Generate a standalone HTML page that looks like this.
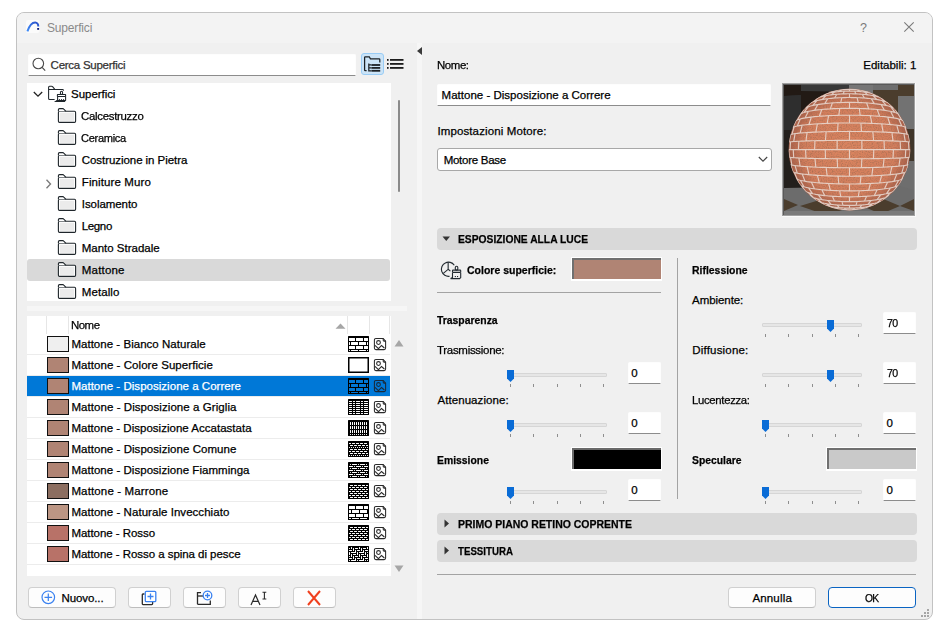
<!DOCTYPE html>
<html><head><meta charset="utf-8"><style>
html,body{margin:0;padding:0;width:950px;height:639px;overflow:hidden;background:#fff;}
body{position:relative;font-family:"Liberation Sans",sans-serif;}
.a{position:absolute;box-sizing:border-box;}
.t{position:absolute;white-space:nowrap;font-family:"Liberation Sans",sans-serif;-webkit-text-stroke:0.25px currentColor;}
svg{position:absolute;overflow:visible;}
.sep{position:absolute;height:1px;background:#ececec;}
.sw{position:absolute;box-sizing:border-box;width:22px;height:16px;border:1.5px solid #111;}
.btn{position:absolute;box-sizing:border-box;background:#fdfdfd;border:1px solid #d0d0d0;border-bottom-color:#bdbdbd;border-radius:4px;}
.inp{position:absolute;box-sizing:border-box;background:#fff;border:1px solid #fdfdfd;border-bottom:1px solid #8c8c8c;border-radius:2px 2px 0 0;}
.trk{position:absolute;box-sizing:border-box;height:4px;background:#e6e6e6;border:1px solid #d6d6d6;border-radius:1px;}
.hdr{position:absolute;box-sizing:border-box;background:#d9d9d9;border-radius:4px;}
</style></head><body>
<!-- dialog frame -->
<div class="a" style="left:16px;top:12px;width:917px;height:608px;border:1px solid #c2c2c2;border-radius:8px;background:#f0f0f0;"></div>
<div class="a" style="left:17px;top:13px;width:915px;height:30px;background:#f3f3f3;border-radius:7px 7px 0 0;"></div>
<!-- title icon -->
<svg style="left:24px;top:18px" width="18" height="18" viewBox="0 0 18 18"><rect x="2" y="2" width="13.5" height="13" rx="2" fill="#fbfbfb"/><defs><linearGradient id="tg" x1="0" y1="1" x2="1" y2="0"><stop offset="0" stop-color="#3f8df8"/><stop offset="1" stop-color="#2a4fc8"/></linearGradient></defs><path d="M3.4 13.4 C5 8.5 7.8 4.4 11.2 4.4 C13 4.4 14.3 6.3 14.3 8.4" fill="none" stroke="url(#tg)" stroke-width="2"/><rect x="13.2" y="10" width="1.9" height="1.8" fill="#0b1a7a"/></svg>
<!-- ? and X -->
<div class="t" style="left:860px;top:19.5px;font-size:12.5px;line-height:16px;color:#7a7a7a;-webkit-text-stroke:0;">?</div>
<svg style="left:904px;top:22px" width="10" height="10" viewBox="0 0 10 10"><path d="M0.3 0.3 L9.7 9.7 M9.7 0.3 L0.3 9.7" stroke="#7a7a7a" stroke-width="1.1"/></svg>

<!-- vertical splitter -->
<div class="a" style="left:417px;top:43px;width:5px;height:576px;background:#f6f6f6;"></div>
<svg style="left:417px;top:47px" width="5" height="8" viewBox="0 0 5 8"><path d="M5 0 L0 4 L5 8 Z" fill="#3a3a3a"/></svg>

<!-- search box -->
<div class="inp" style="left:28px;top:54px;width:328px;height:22px;"></div>
<svg style="left:31px;top:57px" width="16" height="16" viewBox="0 0 16 16"><circle cx="7.3" cy="6.5" r="5.3" fill="none" stroke="#4a4a4a" stroke-width="1.1"/><path d="M11.1 10.4 L14.2 13.6" stroke="#4a4a4a" stroke-width="1.2"/></svg>
<!-- toggle tree view button -->
<div class="a" style="left:361px;top:53px;width:23px;height:22px;background:#cce4f7;border:1px solid #99ccf5;border-radius:3px;"></div>
<svg style="left:364px;top:56px" width="17" height="17" viewBox="0 0 17 17"><path d="M2.6 14.6 H1.3 Q0.6 14.6 0.6 13.9 V1.5 Q0.6 0.8 1.3 0.8 H5.3 L6.4 2.9 H15.1 Q15.8 2.9 15.8 3.6 V6.6" fill="none" stroke="#1c2125" stroke-width="1.25"/><path d="M4.8 7.6 V15.4 M4.8 8.9 H7 M4.8 11.9 H7 M4.8 14.8 H7" fill="none" stroke="#1c2125" stroke-width="1.2"/><rect x="7.3" y="8.1" width="8.9" height="1.8" fill="#1c2125"/><rect x="7.3" y="11" width="8.9" height="1.8" fill="#1c2125"/><rect x="7.3" y="13.9" width="8.9" height="1.8" fill="#1c2125"/></svg>
<svg style="left:387px;top:58px" width="17" height="12" viewBox="0 0 17 12"><rect x="0" y="1" width="1.6" height="1.8" fill="#1c1c1c"/><rect x="3" y="1" width="13.5" height="1.8" fill="#1c1c1c"/><rect x="0" y="5" width="1.6" height="1.8" fill="#1c1c1c"/><rect x="3" y="5" width="13.5" height="1.8" fill="#1c1c1c"/><rect x="0" y="9" width="1.6" height="1.8" fill="#1c1c1c"/><rect x="3" y="9" width="13.5" height="1.8" fill="#1c1c1c"/></svg>

<!-- tree -->
<div class="a" style="left:27px;top:83px;width:364px;height:218px;background:#fff;"></div>
<div class="a" style="left:27px;top:259px;width:363px;height:22px;background:#d9d9d9;border-radius:3px;"></div>
<div class="a" style="left:398px;top:100px;width:2px;height:92px;background:#8a8a8a;border-radius:1px;"></div>
<svg style="left:33.4px;top:91.3px" width="10" height="7" viewBox="0 0 10 7"><path d="M0.8 1 L5 5.2 L9.2 1" fill="none" stroke="#222" stroke-width="1.3"/></svg>
<svg style="left:45px;top:178.8px" width="7" height="10" viewBox="0 0 7 10"><path d="M1.5 0.8 L5.5 5 L1.5 9.2" fill="none" stroke="#7a7a7a" stroke-width="1.35"/></svg>
<!-- superfici icon -->
<svg style="left:44px;top:84px" width="26" height="20" viewBox="0 0 26 20"><g fill="none" stroke="#1f262b" stroke-width="1.05"><path d="M10.6 15.4 H5.6 Q4.6 15.4 4.6 14.4 V3.3 Q4.6 2.3 5.6 2.3 H7.6 Q8.3 2.3 8.8 2.9 L10.8 5.4"/><path d="M4.6 5.5 H18.6 Q19.4 5.5 19.4 6.3 V6.8"/><rect x="16.4" y="7.3" width="2.2" height="3.1" rx="1.1"/><rect x="13.4" y="10.4" width="8.2" height="2.1" rx="0.3"/><path d="M13.6 12.5 V16.3 L11.8 17.4 H20.4 L21.6 16.3 V12.5"/></g><g fill="#1f262b"><circle cx="15.4" cy="15.6" r="0.6"/><circle cx="17.5" cy="15.6" r="0.6"/><circle cx="19.6" cy="15.6" r="0.6"/><path d="M11.3 17.2 L13.6 16 H21.6 L20.6 17.8 H11.3 Z"/></g></svg>
<svg style="left:54px;top:104px" width="26" height="22" viewBox="0 0 26 22"><rect x="4.4" y="7.3" width="17.2" height="11.1" rx="1.1" fill="#fff" stroke="#1f262b" stroke-width="1.1"/><rect x="5.9" y="8.8" width="14.2" height="8.1" fill="#ebebeb"/><path d="M4.4 7.3 V5.7 Q4.4 4.6 5.5 4.6 H8.9 Q9.4 4.6 9.8 5.1 L11.9 7.3" fill="#fff" stroke="#1f262b" stroke-width="1.1"/></svg>
<svg style="left:54px;top:126px" width="26" height="22" viewBox="0 0 26 22"><rect x="4.4" y="7.3" width="17.2" height="11.1" rx="1.1" fill="#fff" stroke="#1f262b" stroke-width="1.1"/><rect x="5.9" y="8.8" width="14.2" height="8.1" fill="#ebebeb"/><path d="M4.4 7.3 V5.7 Q4.4 4.6 5.5 4.6 H8.9 Q9.4 4.6 9.8 5.1 L11.9 7.3" fill="#fff" stroke="#1f262b" stroke-width="1.1"/></svg>
<svg style="left:54px;top:148px" width="26" height="22" viewBox="0 0 26 22"><rect x="4.4" y="7.3" width="17.2" height="11.1" rx="1.1" fill="#fff" stroke="#1f262b" stroke-width="1.1"/><rect x="5.9" y="8.8" width="14.2" height="8.1" fill="#ebebeb"/><path d="M4.4 7.3 V5.7 Q4.4 4.6 5.5 4.6 H8.9 Q9.4 4.6 9.8 5.1 L11.9 7.3" fill="#fff" stroke="#1f262b" stroke-width="1.1"/></svg>
<svg style="left:54px;top:170px" width="26" height="22" viewBox="0 0 26 22"><rect x="4.4" y="7.3" width="17.2" height="11.1" rx="1.1" fill="#fff" stroke="#1f262b" stroke-width="1.1"/><rect x="5.9" y="8.8" width="14.2" height="8.1" fill="#ebebeb"/><path d="M4.4 7.3 V5.7 Q4.4 4.6 5.5 4.6 H8.9 Q9.4 4.6 9.8 5.1 L11.9 7.3" fill="#fff" stroke="#1f262b" stroke-width="1.1"/></svg>
<svg style="left:54px;top:192px" width="26" height="22" viewBox="0 0 26 22"><rect x="4.4" y="7.3" width="17.2" height="11.1" rx="1.1" fill="#fff" stroke="#1f262b" stroke-width="1.1"/><rect x="5.9" y="8.8" width="14.2" height="8.1" fill="#ebebeb"/><path d="M4.4 7.3 V5.7 Q4.4 4.6 5.5 4.6 H8.9 Q9.4 4.6 9.8 5.1 L11.9 7.3" fill="#fff" stroke="#1f262b" stroke-width="1.1"/></svg>
<svg style="left:54px;top:214px" width="26" height="22" viewBox="0 0 26 22"><rect x="4.4" y="7.3" width="17.2" height="11.1" rx="1.1" fill="#fff" stroke="#1f262b" stroke-width="1.1"/><rect x="5.9" y="8.8" width="14.2" height="8.1" fill="#ebebeb"/><path d="M4.4 7.3 V5.7 Q4.4 4.6 5.5 4.6 H8.9 Q9.4 4.6 9.8 5.1 L11.9 7.3" fill="#fff" stroke="#1f262b" stroke-width="1.1"/></svg>
<svg style="left:54px;top:236px" width="26" height="22" viewBox="0 0 26 22"><rect x="4.4" y="7.3" width="17.2" height="11.1" rx="1.1" fill="#fff" stroke="#1f262b" stroke-width="1.1"/><rect x="5.9" y="8.8" width="14.2" height="8.1" fill="#ebebeb"/><path d="M4.4 7.3 V5.7 Q4.4 4.6 5.5 4.6 H8.9 Q9.4 4.6 9.8 5.1 L11.9 7.3" fill="#fff" stroke="#1f262b" stroke-width="1.1"/></svg>
<svg style="left:54px;top:258px" width="26" height="22" viewBox="0 0 26 22"><rect x="4.4" y="7.3" width="17.2" height="11.1" rx="1.1" fill="#fff" stroke="#1f262b" stroke-width="1.1"/><rect x="5.9" y="8.8" width="14.2" height="8.1" fill="#ebebeb"/><path d="M4.4 7.3 V5.7 Q4.4 4.6 5.5 4.6 H8.9 Q9.4 4.6 9.8 5.1 L11.9 7.3" fill="#fff" stroke="#1f262b" stroke-width="1.1"/></svg>
<svg style="left:54px;top:280px" width="26" height="22" viewBox="0 0 26 22"><rect x="4.4" y="7.3" width="17.2" height="11.1" rx="1.1" fill="#fff" stroke="#1f262b" stroke-width="1.1"/><rect x="5.9" y="8.8" width="14.2" height="8.1" fill="#ebebeb"/><path d="M4.4 7.3 V5.7 Q4.4 4.6 5.5 4.6 H8.9 Q9.4 4.6 9.8 5.1 L11.9 7.3" fill="#fff" stroke="#1f262b" stroke-width="1.1"/></svg>

<!-- horizontal splitter -->
<div class="a" style="left:27px;top:306px;width:380px;height:5px;background:#f6f6f6;"></div>

<!-- list -->
<div class="a" style="left:27px;top:316px;width:364px;height:260px;background:#fff;"></div>
<div class="a" style="left:46px;top:316px;width:1px;height:18px;background:#e6e6e6;"></div>
<div class="a" style="left:68px;top:316px;width:1px;height:18px;background:#e6e6e6;"></div>
<div class="a" style="left:347px;top:316px;width:1px;height:18px;background:#e6e6e6;"></div>
<div class="a" style="left:369px;top:316px;width:1px;height:18px;background:#e6e6e6;"></div>
<div class="a" style="left:389px;top:316px;width:1px;height:18px;background:#e6e6e6;"></div>
<svg style="left:335px;top:323px" width="11" height="6" viewBox="0 0 11 6"><path d="M0.5 5.8 L5.5 0.5 L10.5 5.8 Z" fill="#a6a6a6"/></svg>
<div class="sep" style="left:27px;top:354px;width:363px;"></div>
<div class="sw" style="left:47px;top:336px;background:#efefef;"></div>
<svg style="left:348px;top:336px" width="21" height="16" viewBox="0 0 21 16"><rect x="0" y="0" width="21" height="16" rx="0.5" fill="#000"/><rect x="1" y="2" width="6" height="3" rx="0.3" fill="#fff"/><rect x="8" y="2" width="7" height="3" rx="0.3" fill="#fff"/><rect x="16" y="2" width="4" height="3" rx="0.3" fill="#fff"/><rect x="1" y="6" width="1" height="3" rx="0.3" fill="#fff"/><rect x="3" y="6" width="7" height="3" rx="0.3" fill="#fff"/><rect x="11" y="6" width="7" height="3" rx="0.3" fill="#fff"/><rect x="19" y="6" width="1" height="3" rx="0.3" fill="#fff"/><rect x="1" y="10" width="6" height="3" rx="0.3" fill="#fff"/><rect x="8" y="10" width="7" height="3" rx="0.3" fill="#fff"/><rect x="16" y="10" width="4" height="3" rx="0.3" fill="#fff"/><rect x="1" y="14" width="1" height="1" rx="0.3" fill="#fff"/><rect x="3" y="14" width="7" height="1" rx="0.3" fill="#fff"/><rect x="11" y="14" width="7" height="1" rx="0.3" fill="#fff"/><rect x="19" y="14" width="1" height="1" rx="0.3" fill="#fff"/></svg>
<svg style="left:372px;top:336px" width="16" height="16" viewBox="0 0 16 16"><path d="M11.2 2.4 H3.9 Q2.4 2.4 2.4 3.9 V12.1 Q2.4 13.6 3.9 13.6 H12.1 Q13.6 13.6 13.6 12.1 V5.1 Z" fill="none" stroke="#2b2b2b" stroke-width="1.05"/><path d="M11.2 2.4 V4.2 Q11.2 5.1 12.1 5.1 H13.6" fill="none" stroke="#2b2b2b" stroke-width="1.05"/><circle cx="6.5" cy="6.5" r="1.9" fill="none" stroke="#2b2b2b" stroke-width="1.05"/><path d="M3 9.3 L6.5 12.7 L9.5 9.5 L12.4 12" fill="none" stroke="#2b2b2b" stroke-width="1.05"/><path d="M6.5 12.5 V13.5" stroke="#2b2b2b" stroke-width="1"/></svg>
<div class="sep" style="left:27px;top:375px;width:363px;"></div>
<div class="sw" style="left:47px;top:357px;background:#b08474;"></div>
<svg style="left:348px;top:357px" width="21" height="16" viewBox="0 0 21 16"><rect x="0.75" y="0.75" width="19.5" height="14.5" fill="#fff" stroke="#000" stroke-width="1.5"/></svg>
<svg style="left:372px;top:357px" width="16" height="16" viewBox="0 0 16 16"><path d="M11.2 2.4 H3.9 Q2.4 2.4 2.4 3.9 V12.1 Q2.4 13.6 3.9 13.6 H12.1 Q13.6 13.6 13.6 12.1 V5.1 Z" fill="none" stroke="#2b2b2b" stroke-width="1.05"/><path d="M11.2 2.4 V4.2 Q11.2 5.1 12.1 5.1 H13.6" fill="none" stroke="#2b2b2b" stroke-width="1.05"/><circle cx="6.5" cy="6.5" r="1.9" fill="none" stroke="#2b2b2b" stroke-width="1.05"/><path d="M3 9.3 L6.5 12.7 L9.5 9.5 L12.4 12" fill="none" stroke="#2b2b2b" stroke-width="1.05"/><path d="M6.5 12.5 V13.5" stroke="#2b2b2b" stroke-width="1"/></svg>
<div class="a" style="left:27px;top:376px;width:363px;height:20px;background:#0078d7;"></div>
<div class="sep" style="left:27px;top:396px;width:363px;"></div>
<div class="sw" style="left:47px;top:378px;background:#b08474;"></div>
<svg style="left:348px;top:378px" width="21" height="16" viewBox="0 0 21 16"><rect x="0" y="0" width="21" height="16" rx="0.5" fill="#000"/><rect x="1" y="2" width="6" height="3" rx="0.3" fill="#0078d7"/><rect x="8" y="2" width="7" height="3" rx="0.3" fill="#0078d7"/><rect x="16" y="2" width="4" height="3" rx="0.3" fill="#0078d7"/><rect x="1" y="6" width="1" height="3" rx="0.3" fill="#0078d7"/><rect x="3" y="6" width="7" height="3" rx="0.3" fill="#0078d7"/><rect x="11" y="6" width="7" height="3" rx="0.3" fill="#0078d7"/><rect x="19" y="6" width="1" height="3" rx="0.3" fill="#0078d7"/><rect x="1" y="10" width="6" height="3" rx="0.3" fill="#0078d7"/><rect x="8" y="10" width="7" height="3" rx="0.3" fill="#0078d7"/><rect x="16" y="10" width="4" height="3" rx="0.3" fill="#0078d7"/><rect x="1" y="14" width="1" height="1" rx="0.3" fill="#0078d7"/><rect x="3" y="14" width="7" height="1" rx="0.3" fill="#0078d7"/><rect x="11" y="14" width="7" height="1" rx="0.3" fill="#0078d7"/><rect x="19" y="14" width="1" height="1" rx="0.3" fill="#0078d7"/></svg>
<svg style="left:372px;top:378px" width="16" height="16" viewBox="0 0 16 16"><path d="M11.2 2.4 H3.9 Q2.4 2.4 2.4 3.9 V12.1 Q2.4 13.6 3.9 13.6 H12.1 Q13.6 13.6 13.6 12.1 V5.1 Z" fill="none" stroke="#1a2a3a" stroke-width="1.05"/><path d="M11.2 2.4 V4.2 Q11.2 5.1 12.1 5.1 H13.6" fill="none" stroke="#1a2a3a" stroke-width="1.05"/><circle cx="6.5" cy="6.5" r="1.9" fill="none" stroke="#1a2a3a" stroke-width="1.05"/><path d="M3 9.3 L6.5 12.7 L9.5 9.5 L12.4 12" fill="none" stroke="#1a2a3a" stroke-width="1.05"/><path d="M6.5 12.5 V13.5" stroke="#1a2a3a" stroke-width="1"/></svg>
<div class="sep" style="left:27px;top:417px;width:363px;"></div>
<div class="sw" style="left:47px;top:399px;background:#b08474;"></div>
<svg style="left:348px;top:399px" width="21" height="16" viewBox="0 0 21 16"><rect x="0" y="0" width="21" height="16" rx="0.5" fill="#000"/><rect x="1" y="2" width="3" height="1" rx="0.3" fill="#fff"/><rect x="5" y="2" width="2" height="1" rx="0.3" fill="#fff"/><rect x="8" y="2" width="4" height="1" rx="0.3" fill="#fff"/><rect x="13" y="2" width="2" height="1" rx="0.3" fill="#fff"/><rect x="16" y="2" width="4" height="1" rx="0.3" fill="#fff"/><rect x="1" y="4" width="3" height="1" rx="0.3" fill="#fff"/><rect x="5" y="4" width="2" height="1" rx="0.3" fill="#fff"/><rect x="8" y="4" width="4" height="1" rx="0.3" fill="#fff"/><rect x="13" y="4" width="2" height="1" rx="0.3" fill="#fff"/><rect x="16" y="4" width="4" height="1" rx="0.3" fill="#fff"/><rect x="1" y="6" width="3" height="1" rx="0.3" fill="#fff"/><rect x="5" y="6" width="2" height="1" rx="0.3" fill="#fff"/><rect x="8" y="6" width="4" height="1" rx="0.3" fill="#fff"/><rect x="13" y="6" width="2" height="1" rx="0.3" fill="#fff"/><rect x="16" y="6" width="4" height="1" rx="0.3" fill="#fff"/><rect x="1" y="8" width="3" height="1" rx="0.3" fill="#fff"/><rect x="5" y="8" width="2" height="1" rx="0.3" fill="#fff"/><rect x="8" y="8" width="4" height="1" rx="0.3" fill="#fff"/><rect x="13" y="8" width="2" height="1" rx="0.3" fill="#fff"/><rect x="16" y="8" width="4" height="1" rx="0.3" fill="#fff"/><rect x="1" y="10" width="3" height="1" rx="0.3" fill="#fff"/><rect x="5" y="10" width="2" height="1" rx="0.3" fill="#fff"/><rect x="8" y="10" width="4" height="1" rx="0.3" fill="#fff"/><rect x="13" y="10" width="2" height="1" rx="0.3" fill="#fff"/><rect x="16" y="10" width="4" height="1" rx="0.3" fill="#fff"/><rect x="1" y="12" width="3" height="1" rx="0.3" fill="#fff"/><rect x="5" y="12" width="2" height="1" rx="0.3" fill="#fff"/><rect x="8" y="12" width="4" height="1" rx="0.3" fill="#fff"/><rect x="13" y="12" width="2" height="1" rx="0.3" fill="#fff"/><rect x="16" y="12" width="4" height="1" rx="0.3" fill="#fff"/><rect x="1" y="14" width="3" height="1" rx="0.3" fill="#fff"/><rect x="5" y="14" width="2" height="1" rx="0.3" fill="#fff"/><rect x="8" y="14" width="4" height="1" rx="0.3" fill="#fff"/><rect x="13" y="14" width="2" height="1" rx="0.3" fill="#fff"/><rect x="16" y="14" width="4" height="1" rx="0.3" fill="#fff"/></svg>
<svg style="left:372px;top:399px" width="16" height="16" viewBox="0 0 16 16"><path d="M11.2 2.4 H3.9 Q2.4 2.4 2.4 3.9 V12.1 Q2.4 13.6 3.9 13.6 H12.1 Q13.6 13.6 13.6 12.1 V5.1 Z" fill="none" stroke="#2b2b2b" stroke-width="1.05"/><path d="M11.2 2.4 V4.2 Q11.2 5.1 12.1 5.1 H13.6" fill="none" stroke="#2b2b2b" stroke-width="1.05"/><circle cx="6.5" cy="6.5" r="1.9" fill="none" stroke="#2b2b2b" stroke-width="1.05"/><path d="M3 9.3 L6.5 12.7 L9.5 9.5 L12.4 12" fill="none" stroke="#2b2b2b" stroke-width="1.05"/><path d="M6.5 12.5 V13.5" stroke="#2b2b2b" stroke-width="1"/></svg>
<div class="sep" style="left:27px;top:438px;width:363px;"></div>
<div class="sw" style="left:47px;top:420px;background:#b08474;"></div>
<svg style="left:348px;top:420px" width="21" height="16" viewBox="0 0 21 16"><rect x="0" y="0" width="21" height="16" rx="0.5" fill="#000"/><rect x="2" y="2" width="1" height="3" rx="0.3" fill="#fff"/><rect x="4" y="2" width="1" height="3" rx="0.3" fill="#fff"/><rect x="6" y="2" width="1" height="3" rx="0.3" fill="#fff"/><rect x="8" y="2" width="1" height="3" rx="0.3" fill="#fff"/><rect x="10" y="2" width="1" height="3" rx="0.3" fill="#fff"/><rect x="12" y="2" width="1" height="3" rx="0.3" fill="#fff"/><rect x="14" y="2" width="1" height="3" rx="0.3" fill="#fff"/><rect x="16" y="2" width="1" height="3" rx="0.3" fill="#fff"/><rect x="18" y="2" width="1" height="3" rx="0.3" fill="#fff"/><rect x="2" y="6" width="1" height="3" rx="0.3" fill="#fff"/><rect x="4" y="6" width="1" height="3" rx="0.3" fill="#fff"/><rect x="6" y="6" width="1" height="3" rx="0.3" fill="#fff"/><rect x="8" y="6" width="1" height="3" rx="0.3" fill="#fff"/><rect x="10" y="6" width="1" height="3" rx="0.3" fill="#fff"/><rect x="12" y="6" width="1" height="3" rx="0.3" fill="#fff"/><rect x="14" y="6" width="1" height="3" rx="0.3" fill="#fff"/><rect x="16" y="6" width="1" height="3" rx="0.3" fill="#fff"/><rect x="18" y="6" width="1" height="3" rx="0.3" fill="#fff"/><rect x="2" y="10" width="1" height="3" rx="0.3" fill="#fff"/><rect x="4" y="10" width="1" height="3" rx="0.3" fill="#fff"/><rect x="6" y="10" width="1" height="3" rx="0.3" fill="#fff"/><rect x="8" y="10" width="1" height="3" rx="0.3" fill="#fff"/><rect x="10" y="10" width="1" height="3" rx="0.3" fill="#fff"/><rect x="12" y="10" width="1" height="3" rx="0.3" fill="#fff"/><rect x="14" y="10" width="1" height="3" rx="0.3" fill="#fff"/><rect x="16" y="10" width="1" height="3" rx="0.3" fill="#fff"/><rect x="18" y="10" width="1" height="3" rx="0.3" fill="#fff"/><rect x="2" y="14" width="1" height="1" rx="0.3" fill="#fff"/><rect x="4" y="14" width="1" height="1" rx="0.3" fill="#fff"/><rect x="6" y="14" width="1" height="1" rx="0.3" fill="#fff"/><rect x="8" y="14" width="1" height="1" rx="0.3" fill="#fff"/><rect x="10" y="14" width="1" height="1" rx="0.3" fill="#fff"/><rect x="12" y="14" width="1" height="1" rx="0.3" fill="#fff"/><rect x="14" y="14" width="1" height="1" rx="0.3" fill="#fff"/><rect x="16" y="14" width="1" height="1" rx="0.3" fill="#fff"/><rect x="18" y="14" width="1" height="1" rx="0.3" fill="#fff"/></svg>
<svg style="left:372px;top:420px" width="16" height="16" viewBox="0 0 16 16"><path d="M11.2 2.4 H3.9 Q2.4 2.4 2.4 3.9 V12.1 Q2.4 13.6 3.9 13.6 H12.1 Q13.6 13.6 13.6 12.1 V5.1 Z" fill="none" stroke="#2b2b2b" stroke-width="1.05"/><path d="M11.2 2.4 V4.2 Q11.2 5.1 12.1 5.1 H13.6" fill="none" stroke="#2b2b2b" stroke-width="1.05"/><circle cx="6.5" cy="6.5" r="1.9" fill="none" stroke="#2b2b2b" stroke-width="1.05"/><path d="M3 9.3 L6.5 12.7 L9.5 9.5 L12.4 12" fill="none" stroke="#2b2b2b" stroke-width="1.05"/><path d="M6.5 12.5 V13.5" stroke="#2b2b2b" stroke-width="1"/></svg>
<div class="sep" style="left:27px;top:459px;width:363px;"></div>
<div class="sw" style="left:47px;top:441px;background:#b08474;"></div>
<svg style="left:348px;top:441px" width="21" height="16" viewBox="0 0 21 16"><rect x="0" y="0" width="21" height="16" rx="0.5" fill="#000"/><rect x="1" y="2" width="2" height="1" rx="0.3" fill="#fff"/><rect x="4" y="2" width="3" height="1" rx="0.3" fill="#fff"/><rect x="8" y="2" width="3" height="1" rx="0.3" fill="#fff"/><rect x="12" y="2" width="3" height="1" rx="0.3" fill="#fff"/><rect x="16" y="2" width="3" height="1" rx="0.3" fill="#fff"/><rect x="2" y="4" width="3" height="1" rx="0.3" fill="#fff"/><rect x="6" y="4" width="3" height="1" rx="0.3" fill="#fff"/><rect x="10" y="4" width="3" height="1" rx="0.3" fill="#fff"/><rect x="14" y="4" width="3" height="1" rx="0.3" fill="#fff"/><rect x="18" y="4" width="2" height="1" rx="0.3" fill="#fff"/><rect x="1" y="6" width="1" height="1" rx="0.3" fill="#fff"/><rect x="3" y="6" width="1" height="1" rx="0.3" fill="#fff"/><rect x="5" y="6" width="1" height="1" rx="0.3" fill="#fff"/><rect x="7" y="6" width="1" height="1" rx="0.3" fill="#fff"/><rect x="9" y="6" width="1" height="1" rx="0.3" fill="#fff"/><rect x="11" y="6" width="1" height="1" rx="0.3" fill="#fff"/><rect x="13" y="6" width="1" height="1" rx="0.3" fill="#fff"/><rect x="15" y="6" width="1" height="1" rx="0.3" fill="#fff"/><rect x="17" y="6" width="1" height="1" rx="0.3" fill="#fff"/><rect x="19" y="6" width="1" height="1" rx="0.3" fill="#fff"/><rect x="2" y="8" width="3" height="1" rx="0.3" fill="#fff"/><rect x="6" y="8" width="3" height="1" rx="0.3" fill="#fff"/><rect x="10" y="8" width="3" height="1" rx="0.3" fill="#fff"/><rect x="14" y="8" width="3" height="1" rx="0.3" fill="#fff"/><rect x="18" y="8" width="2" height="1" rx="0.3" fill="#fff"/><rect x="1" y="10" width="2" height="1" rx="0.3" fill="#fff"/><rect x="4" y="10" width="3" height="1" rx="0.3" fill="#fff"/><rect x="8" y="10" width="3" height="1" rx="0.3" fill="#fff"/><rect x="12" y="10" width="3" height="1" rx="0.3" fill="#fff"/><rect x="16" y="10" width="3" height="1" rx="0.3" fill="#fff"/><rect x="2" y="12" width="3" height="1" rx="0.3" fill="#fff"/><rect x="6" y="12" width="3" height="1" rx="0.3" fill="#fff"/><rect x="10" y="12" width="3" height="1" rx="0.3" fill="#fff"/><rect x="14" y="12" width="3" height="1" rx="0.3" fill="#fff"/><rect x="18" y="12" width="2" height="1" rx="0.3" fill="#fff"/><rect x="1" y="14" width="1" height="1" rx="0.3" fill="#fff"/><rect x="3" y="14" width="1" height="1" rx="0.3" fill="#fff"/><rect x="5" y="14" width="1" height="1" rx="0.3" fill="#fff"/><rect x="7" y="14" width="1" height="1" rx="0.3" fill="#fff"/><rect x="9" y="14" width="1" height="1" rx="0.3" fill="#fff"/><rect x="11" y="14" width="1" height="1" rx="0.3" fill="#fff"/><rect x="13" y="14" width="1" height="1" rx="0.3" fill="#fff"/><rect x="15" y="14" width="1" height="1" rx="0.3" fill="#fff"/><rect x="17" y="14" width="1" height="1" rx="0.3" fill="#fff"/><rect x="19" y="14" width="1" height="1" rx="0.3" fill="#fff"/></svg>
<svg style="left:372px;top:441px" width="16" height="16" viewBox="0 0 16 16"><path d="M11.2 2.4 H3.9 Q2.4 2.4 2.4 3.9 V12.1 Q2.4 13.6 3.9 13.6 H12.1 Q13.6 13.6 13.6 12.1 V5.1 Z" fill="none" stroke="#2b2b2b" stroke-width="1.05"/><path d="M11.2 2.4 V4.2 Q11.2 5.1 12.1 5.1 H13.6" fill="none" stroke="#2b2b2b" stroke-width="1.05"/><circle cx="6.5" cy="6.5" r="1.9" fill="none" stroke="#2b2b2b" stroke-width="1.05"/><path d="M3 9.3 L6.5 12.7 L9.5 9.5 L12.4 12" fill="none" stroke="#2b2b2b" stroke-width="1.05"/><path d="M6.5 12.5 V13.5" stroke="#2b2b2b" stroke-width="1"/></svg>
<div class="sep" style="left:27px;top:480px;width:363px;"></div>
<div class="sw" style="left:47px;top:462px;background:#b08474;"></div>
<svg style="left:348px;top:462px" width="21" height="16" viewBox="0 0 21 16"><rect x="0" y="0" width="21" height="16" rx="0.5" fill="#000"/><rect x="2" y="2" width="1" height="1" rx="0.3" fill="#fff"/><rect x="4" y="2" width="5" height="1" rx="0.3" fill="#fff"/><rect x="10" y="2" width="1" height="1" rx="0.3" fill="#fff"/><rect x="12" y="2" width="5" height="1" rx="0.3" fill="#fff"/><rect x="18" y="2" width="1" height="1" rx="0.3" fill="#fff"/><rect x="1" y="4" width="4" height="1" rx="0.3" fill="#fff"/><rect x="6" y="4" width="1" height="1" rx="0.3" fill="#fff"/><rect x="8" y="4" width="5" height="1" rx="0.3" fill="#fff"/><rect x="14" y="4" width="1" height="1" rx="0.3" fill="#fff"/><rect x="16" y="4" width="4" height="1" rx="0.3" fill="#fff"/><rect x="2" y="6" width="1" height="1" rx="0.3" fill="#fff"/><rect x="4" y="6" width="5" height="1" rx="0.3" fill="#fff"/><rect x="10" y="6" width="1" height="1" rx="0.3" fill="#fff"/><rect x="12" y="6" width="5" height="1" rx="0.3" fill="#fff"/><rect x="18" y="6" width="1" height="1" rx="0.3" fill="#fff"/><rect x="1" y="8" width="4" height="1" rx="0.3" fill="#fff"/><rect x="6" y="8" width="1" height="1" rx="0.3" fill="#fff"/><rect x="8" y="8" width="5" height="1" rx="0.3" fill="#fff"/><rect x="14" y="8" width="1" height="1" rx="0.3" fill="#fff"/><rect x="16" y="8" width="4" height="1" rx="0.3" fill="#fff"/><rect x="2" y="10" width="1" height="1" rx="0.3" fill="#fff"/><rect x="4" y="10" width="5" height="1" rx="0.3" fill="#fff"/><rect x="10" y="10" width="1" height="1" rx="0.3" fill="#fff"/><rect x="12" y="10" width="5" height="1" rx="0.3" fill="#fff"/><rect x="18" y="10" width="1" height="1" rx="0.3" fill="#fff"/><rect x="1" y="12" width="4" height="1" rx="0.3" fill="#fff"/><rect x="6" y="12" width="1" height="1" rx="0.3" fill="#fff"/><rect x="8" y="12" width="5" height="1" rx="0.3" fill="#fff"/><rect x="14" y="12" width="1" height="1" rx="0.3" fill="#fff"/><rect x="16" y="12" width="4" height="1" rx="0.3" fill="#fff"/><rect x="2" y="14" width="1" height="1" rx="0.3" fill="#fff"/><rect x="4" y="14" width="5" height="1" rx="0.3" fill="#fff"/><rect x="10" y="14" width="1" height="1" rx="0.3" fill="#fff"/><rect x="12" y="14" width="5" height="1" rx="0.3" fill="#fff"/><rect x="18" y="14" width="1" height="1" rx="0.3" fill="#fff"/></svg>
<svg style="left:372px;top:462px" width="16" height="16" viewBox="0 0 16 16"><path d="M11.2 2.4 H3.9 Q2.4 2.4 2.4 3.9 V12.1 Q2.4 13.6 3.9 13.6 H12.1 Q13.6 13.6 13.6 12.1 V5.1 Z" fill="none" stroke="#2b2b2b" stroke-width="1.05"/><path d="M11.2 2.4 V4.2 Q11.2 5.1 12.1 5.1 H13.6" fill="none" stroke="#2b2b2b" stroke-width="1.05"/><circle cx="6.5" cy="6.5" r="1.9" fill="none" stroke="#2b2b2b" stroke-width="1.05"/><path d="M3 9.3 L6.5 12.7 L9.5 9.5 L12.4 12" fill="none" stroke="#2b2b2b" stroke-width="1.05"/><path d="M6.5 12.5 V13.5" stroke="#2b2b2b" stroke-width="1"/></svg>
<div class="sep" style="left:27px;top:501px;width:363px;"></div>
<div class="sw" style="left:47px;top:483px;background:#8c6e60;"></div>
<svg style="left:348px;top:483px" width="21" height="16" viewBox="0 0 21 16"><rect x="0" y="0" width="21" height="16" rx="0.5" fill="#000"/><rect x="2" y="2" width="3" height="1" rx="0.3" fill="#fff"/><rect x="6" y="2" width="3" height="1" rx="0.3" fill="#fff"/><rect x="10" y="2" width="3" height="1" rx="0.3" fill="#fff"/><rect x="14" y="2" width="3" height="1" rx="0.3" fill="#fff"/><rect x="18" y="2" width="2" height="1" rx="0.3" fill="#fff"/><rect x="1" y="4" width="2" height="1" rx="0.3" fill="#fff"/><rect x="4" y="4" width="3" height="1" rx="0.3" fill="#fff"/><rect x="8" y="4" width="3" height="1" rx="0.3" fill="#fff"/><rect x="12" y="4" width="3" height="1" rx="0.3" fill="#fff"/><rect x="16" y="4" width="3" height="1" rx="0.3" fill="#fff"/><rect x="2" y="6" width="3" height="1" rx="0.3" fill="#fff"/><rect x="6" y="6" width="3" height="1" rx="0.3" fill="#fff"/><rect x="10" y="6" width="3" height="1" rx="0.3" fill="#fff"/><rect x="14" y="6" width="3" height="1" rx="0.3" fill="#fff"/><rect x="18" y="6" width="2" height="1" rx="0.3" fill="#fff"/><rect x="1" y="8" width="2" height="1" rx="0.3" fill="#fff"/><rect x="4" y="8" width="3" height="1" rx="0.3" fill="#fff"/><rect x="8" y="8" width="3" height="1" rx="0.3" fill="#fff"/><rect x="12" y="8" width="3" height="1" rx="0.3" fill="#fff"/><rect x="16" y="8" width="3" height="1" rx="0.3" fill="#fff"/><rect x="2" y="10" width="3" height="1" rx="0.3" fill="#fff"/><rect x="6" y="10" width="3" height="1" rx="0.3" fill="#fff"/><rect x="10" y="10" width="3" height="1" rx="0.3" fill="#fff"/><rect x="14" y="10" width="3" height="1" rx="0.3" fill="#fff"/><rect x="18" y="10" width="2" height="1" rx="0.3" fill="#fff"/><rect x="1" y="12" width="2" height="1" rx="0.3" fill="#fff"/><rect x="4" y="12" width="3" height="1" rx="0.3" fill="#fff"/><rect x="8" y="12" width="3" height="1" rx="0.3" fill="#fff"/><rect x="12" y="12" width="3" height="1" rx="0.3" fill="#fff"/><rect x="16" y="12" width="3" height="1" rx="0.3" fill="#fff"/><rect x="2" y="14" width="3" height="1" rx="0.3" fill="#fff"/><rect x="6" y="14" width="3" height="1" rx="0.3" fill="#fff"/><rect x="10" y="14" width="3" height="1" rx="0.3" fill="#fff"/><rect x="14" y="14" width="3" height="1" rx="0.3" fill="#fff"/><rect x="18" y="14" width="2" height="1" rx="0.3" fill="#fff"/></svg>
<svg style="left:372px;top:483px" width="16" height="16" viewBox="0 0 16 16"><path d="M11.2 2.4 H3.9 Q2.4 2.4 2.4 3.9 V12.1 Q2.4 13.6 3.9 13.6 H12.1 Q13.6 13.6 13.6 12.1 V5.1 Z" fill="none" stroke="#2b2b2b" stroke-width="1.05"/><path d="M11.2 2.4 V4.2 Q11.2 5.1 12.1 5.1 H13.6" fill="none" stroke="#2b2b2b" stroke-width="1.05"/><circle cx="6.5" cy="6.5" r="1.9" fill="none" stroke="#2b2b2b" stroke-width="1.05"/><path d="M3 9.3 L6.5 12.7 L9.5 9.5 L12.4 12" fill="none" stroke="#2b2b2b" stroke-width="1.05"/><path d="M6.5 12.5 V13.5" stroke="#2b2b2b" stroke-width="1"/></svg>
<div class="sep" style="left:27px;top:522px;width:363px;"></div>
<div class="sw" style="left:47px;top:504px;background:#bc9684;"></div>
<svg style="left:348px;top:504px" width="21" height="16" viewBox="0 0 21 16"><rect x="0" y="0" width="21" height="16" rx="0.5" fill="#000"/><rect x="1" y="2" width="6" height="3" rx="0.3" fill="#fff"/><rect x="8" y="2" width="7" height="3" rx="0.3" fill="#fff"/><rect x="16" y="2" width="4" height="3" rx="0.3" fill="#fff"/><rect x="1" y="6" width="2" height="3" rx="0.3" fill="#fff"/><rect x="4" y="6" width="7" height="3" rx="0.3" fill="#fff"/><rect x="12" y="6" width="7" height="3" rx="0.3" fill="#fff"/><rect x="1" y="10" width="6" height="3" rx="0.3" fill="#fff"/><rect x="8" y="10" width="7" height="3" rx="0.3" fill="#fff"/><rect x="16" y="10" width="4" height="3" rx="0.3" fill="#fff"/><rect x="1" y="14" width="2" height="1" rx="0.3" fill="#fff"/><rect x="4" y="14" width="7" height="1" rx="0.3" fill="#fff"/><rect x="12" y="14" width="7" height="1" rx="0.3" fill="#fff"/></svg>
<svg style="left:372px;top:504px" width="16" height="16" viewBox="0 0 16 16"><path d="M11.2 2.4 H3.9 Q2.4 2.4 2.4 3.9 V12.1 Q2.4 13.6 3.9 13.6 H12.1 Q13.6 13.6 13.6 12.1 V5.1 Z" fill="none" stroke="#2b2b2b" stroke-width="1.05"/><path d="M11.2 2.4 V4.2 Q11.2 5.1 12.1 5.1 H13.6" fill="none" stroke="#2b2b2b" stroke-width="1.05"/><circle cx="6.5" cy="6.5" r="1.9" fill="none" stroke="#2b2b2b" stroke-width="1.05"/><path d="M3 9.3 L6.5 12.7 L9.5 9.5 L12.4 12" fill="none" stroke="#2b2b2b" stroke-width="1.05"/><path d="M6.5 12.5 V13.5" stroke="#2b2b2b" stroke-width="1"/></svg>
<div class="sep" style="left:27px;top:543px;width:363px;"></div>
<div class="sw" style="left:47px;top:525px;background:#b87268;"></div>
<svg style="left:348px;top:525px" width="21" height="16" viewBox="0 0 21 16"><rect x="0" y="0" width="21" height="16" rx="0.5" fill="#000"/><rect x="2" y="2" width="3" height="1" rx="0.3" fill="#fff"/><rect x="6" y="2" width="3" height="1" rx="0.3" fill="#fff"/><rect x="10" y="2" width="3" height="1" rx="0.3" fill="#fff"/><rect x="14" y="2" width="3" height="1" rx="0.3" fill="#fff"/><rect x="18" y="2" width="2" height="1" rx="0.3" fill="#fff"/><rect x="1" y="4" width="2" height="1" rx="0.3" fill="#fff"/><rect x="4" y="4" width="3" height="1" rx="0.3" fill="#fff"/><rect x="8" y="4" width="3" height="1" rx="0.3" fill="#fff"/><rect x="12" y="4" width="3" height="1" rx="0.3" fill="#fff"/><rect x="16" y="4" width="3" height="1" rx="0.3" fill="#fff"/><rect x="2" y="6" width="3" height="1" rx="0.3" fill="#fff"/><rect x="6" y="6" width="3" height="1" rx="0.3" fill="#fff"/><rect x="10" y="6" width="3" height="1" rx="0.3" fill="#fff"/><rect x="14" y="6" width="3" height="1" rx="0.3" fill="#fff"/><rect x="18" y="6" width="2" height="1" rx="0.3" fill="#fff"/><rect x="1" y="8" width="2" height="1" rx="0.3" fill="#fff"/><rect x="4" y="8" width="3" height="1" rx="0.3" fill="#fff"/><rect x="8" y="8" width="3" height="1" rx="0.3" fill="#fff"/><rect x="12" y="8" width="3" height="1" rx="0.3" fill="#fff"/><rect x="16" y="8" width="3" height="1" rx="0.3" fill="#fff"/><rect x="2" y="10" width="3" height="1" rx="0.3" fill="#fff"/><rect x="6" y="10" width="3" height="1" rx="0.3" fill="#fff"/><rect x="10" y="10" width="3" height="1" rx="0.3" fill="#fff"/><rect x="14" y="10" width="3" height="1" rx="0.3" fill="#fff"/><rect x="18" y="10" width="2" height="1" rx="0.3" fill="#fff"/><rect x="1" y="12" width="2" height="1" rx="0.3" fill="#fff"/><rect x="4" y="12" width="3" height="1" rx="0.3" fill="#fff"/><rect x="8" y="12" width="3" height="1" rx="0.3" fill="#fff"/><rect x="12" y="12" width="3" height="1" rx="0.3" fill="#fff"/><rect x="16" y="12" width="3" height="1" rx="0.3" fill="#fff"/><rect x="2" y="14" width="3" height="1" rx="0.3" fill="#fff"/><rect x="6" y="14" width="3" height="1" rx="0.3" fill="#fff"/><rect x="10" y="14" width="3" height="1" rx="0.3" fill="#fff"/><rect x="14" y="14" width="3" height="1" rx="0.3" fill="#fff"/><rect x="18" y="14" width="2" height="1" rx="0.3" fill="#fff"/></svg>
<svg style="left:372px;top:525px" width="16" height="16" viewBox="0 0 16 16"><path d="M11.2 2.4 H3.9 Q2.4 2.4 2.4 3.9 V12.1 Q2.4 13.6 3.9 13.6 H12.1 Q13.6 13.6 13.6 12.1 V5.1 Z" fill="none" stroke="#2b2b2b" stroke-width="1.05"/><path d="M11.2 2.4 V4.2 Q11.2 5.1 12.1 5.1 H13.6" fill="none" stroke="#2b2b2b" stroke-width="1.05"/><circle cx="6.5" cy="6.5" r="1.9" fill="none" stroke="#2b2b2b" stroke-width="1.05"/><path d="M3 9.3 L6.5 12.7 L9.5 9.5 L12.4 12" fill="none" stroke="#2b2b2b" stroke-width="1.05"/><path d="M6.5 12.5 V13.5" stroke="#2b2b2b" stroke-width="1"/></svg>
<div class="sep" style="left:27px;top:564px;width:363px;"></div>
<div class="sw" style="left:47px;top:546px;background:#b87268;"></div>
<svg style="left:348px;top:546px" width="21" height="16" viewBox="0 0 21 16"><rect x="0" y="0" width="21" height="16" rx="0.5" fill="#000"/><rect x="7" y="2" width="3" height="1.0" rx="0.3" fill="#fff"/><rect x="15" y="2" width="3" height="1.0" rx="0.3" fill="#fff"/><rect x="1" y="4" width="3" height="1.0" rx="0.3" fill="#fff"/><rect x="9" y="4" width="3" height="1.0" rx="0.3" fill="#fff"/><rect x="17" y="4" width="3" height="1.0" rx="0.3" fill="#fff"/><rect x="3" y="6" width="5" height="1.0" rx="0.3" fill="#fff"/><rect x="11" y="6" width="5" height="1.0" rx="0.3" fill="#fff"/><rect x="5" y="8" width="3" height="1.0" rx="0.3" fill="#fff"/><rect x="13" y="8" width="3" height="1.0" rx="0.3" fill="#fff"/><rect x="7" y="10" width="3" height="1.0" rx="0.3" fill="#fff"/><rect x="15" y="10" width="3" height="1.0" rx="0.3" fill="#fff"/><rect x="1" y="12" width="3" height="1.0" rx="0.3" fill="#fff"/><rect x="9" y="12" width="3" height="1.0" rx="0.3" fill="#fff"/><rect x="17" y="12" width="3" height="1.0" rx="0.3" fill="#fff"/><rect x="3" y="14" width="5" height="1.0" rx="0.3" fill="#fff"/><rect x="11" y="14" width="5" height="1.0" rx="0.3" fill="#fff"/><rect x="3" y="1" width="1.0" height="2" rx="0.3" fill="#fff"/><rect x="5" y="2" width="1.0" height="3" rx="0.3" fill="#fff"/><rect x="11" y="1" width="1.0" height="2" rx="0.3" fill="#fff"/><rect x="13" y="2" width="1.0" height="3" rx="0.3" fill="#fff"/><rect x="19" y="1" width="1.0" height="2" rx="0.3" fill="#fff"/><rect x="7" y="4" width="1.0" height="3" rx="0.3" fill="#fff"/><rect x="15" y="4" width="1.0" height="3" rx="0.3" fill="#fff"/><rect x="1" y="6" width="1.0" height="3" rx="0.3" fill="#fff"/><rect x="9" y="6" width="1.0" height="3" rx="0.3" fill="#fff"/><rect x="17" y="6" width="1.0" height="3" rx="0.3" fill="#fff"/><rect x="3" y="8" width="1.0" height="3" rx="0.3" fill="#fff"/><rect x="11" y="8" width="1.0" height="3" rx="0.3" fill="#fff"/><rect x="19" y="8" width="1.0" height="3" rx="0.3" fill="#fff"/><rect x="5" y="10" width="1.0" height="3" rx="0.3" fill="#fff"/><rect x="13" y="10" width="1.0" height="3" rx="0.3" fill="#fff"/><rect x="7" y="12" width="1.0" height="3" rx="0.3" fill="#fff"/><rect x="15" y="12" width="1.0" height="3" rx="0.3" fill="#fff"/><rect x="1" y="2" width="1.0" height="1.0" rx="0.3" fill="#fff"/><rect x="19" y="6" width="1.0" height="1.0" rx="0.3" fill="#fff"/><rect x="1" y="10" width="1.0" height="1.0" rx="0.3" fill="#fff"/><rect x="1" y="14" width="1.0" height="1.0" rx="0.3" fill="#fff"/><rect x="9" y="14" width="1.0" height="1.0" rx="0.3" fill="#fff"/><rect x="17" y="14" width="1.0" height="1.0" rx="0.3" fill="#fff"/><rect x="19" y="14" width="1.0" height="1.0" rx="0.3" fill="#fff"/></svg>
<svg style="left:372px;top:546px" width="16" height="16" viewBox="0 0 16 16"><path d="M11.2 2.4 H3.9 Q2.4 2.4 2.4 3.9 V12.1 Q2.4 13.6 3.9 13.6 H12.1 Q13.6 13.6 13.6 12.1 V5.1 Z" fill="none" stroke="#2b2b2b" stroke-width="1.05"/><path d="M11.2 2.4 V4.2 Q11.2 5.1 12.1 5.1 H13.6" fill="none" stroke="#2b2b2b" stroke-width="1.05"/><circle cx="6.5" cy="6.5" r="1.9" fill="none" stroke="#2b2b2b" stroke-width="1.05"/><path d="M3 9.3 L6.5 12.7 L9.5 9.5 L12.4 12" fill="none" stroke="#2b2b2b" stroke-width="1.05"/><path d="M6.5 12.5 V13.5" stroke="#2b2b2b" stroke-width="1"/></svg>
<svg style="left:394px;top:339px" width="10" height="8" viewBox="0 0 10 8"><path d="M0.5 7.5 L5 1 L9.5 7.5 Z" fill="#a6a6a6"/></svg>
<svg style="left:394px;top:564.8px" width="10" height="8" viewBox="0 0 10 8"><path d="M0.5 0.5 L5 7 L9.5 0.5 Z" fill="#a6a6a6"/></svg>

<!-- bottom-left buttons -->
<div class="btn" style="left:28px;top:587px;width:88px;height:21px;"></div>
<svg style="left:41px;top:590px" width="15" height="15" viewBox="0 0 15 15"><circle cx="7.3" cy="7.3" r="6.3" fill="none" stroke="#3b82f0" stroke-width="1.2"/><path d="M7.3 3.5 V11.1 M3.5 7.3 H11.1" stroke="#3b82f0" stroke-width="1.2"/></svg>
<div class="btn" style="left:128px;top:587px;width:43px;height:21px;"></div>
<svg style="left:141px;top:590px" width="16" height="16" viewBox="0 0 16 16"><path d="M3.5 4 H2 Q1.3 4 1.3 4.8 V13.8 Q1.3 14.6 2 14.6 H10.8 Q11.6 14.6 11.6 13.8 V12" fill="none" stroke="#2a2a2a" stroke-width="1.3"/><rect x="4.3" y="1.3" width="10.5" height="10.4" rx="1" fill="#fff" stroke="#3b82f0" stroke-width="1.3"/><path d="M9.5 3.5 V9.5 M6.5 6.5 H12.5" stroke="#3b82f0" stroke-width="1.3"/></svg>
<div class="btn" style="left:183px;top:587px;width:43px;height:21px;"></div>
<svg style="left:196px;top:590px" width="18" height="16" viewBox="0 0 18 16"><path d="M1.5 14.3 V2.7 H5" fill="none" stroke="#2a2a2a" stroke-width="1.3"/><path d="M1.5 6 H7" stroke="#2a2a2a" stroke-width="1.3"/><path d="M1.5 14.3 H14.3 V10.5" fill="none" stroke="#2a2a2a" stroke-width="1.3"/><circle cx="11.5" cy="5.5" r="4.3" fill="#fff" stroke="#3b82f0" stroke-width="1.3"/><path d="M11.5 3 V8 M9 5.5 H14" stroke="#3b82f0" stroke-width="1.3"/></svg>
<div class="btn" style="left:238px;top:587px;width:43px;height:21px;"></div>
<svg style="left:250px;top:591px" width="18" height="15" viewBox="0 0 18 15"><path d="M1 14 L5.5 4 L10 14 M2.8 10.3 H8.2" fill="none" stroke="#2a2a2a" stroke-width="1.2"/><path d="M12.5 1.2 H16.3 M14.4 1.2 V8 M12.5 8 H16.3" fill="none" stroke="#2a2a2a" stroke-width="1.1"/></svg>
<div class="btn" style="left:293px;top:587px;width:43px;height:21px;"></div>
<svg style="left:307px;top:590px" width="14" height="16" viewBox="0 0 14 16"><path d="M1 1 L13 15 M13 1 L1 15" stroke="#f0401e" stroke-width="2"/></svg>

<!-- right panel -->
<div class="inp" style="left:437px;top:84px;width:334px;height:22px;"></div>
<div class="a" style="left:437px;top:148px;width:335px;height:23px;background:#fff;border:1px solid #a8a8a8;border-radius:3px;"></div>
<svg style="left:758px;top:156px" width="10" height="7" viewBox="0 0 10 7"><path d="M0.8 1 L5 5.2 L9.2 1" fill="none" stroke="#444" stroke-width="1.1"/></svg>
<svg style="left:782px;top:83px" width="134" height="134" viewBox="782 83 134 134">
<rect x="782" y="83" width="134" height="134" fill="#fafafa"/>
<rect x="782" y="83" width="133" height="133" fill="#a0a0a0"/>
<rect x="783" y="84" width="131" height="131" fill="#5a5a5a"/>
<clipPath id="pc"><rect x="784" y="85" width="130" height="130"/></clipPath>
<g clip-path="url(#pc)">
<rect x="784" y="85" width="130" height="130" fill="#2d2d2d"/>
<polygon points="784,85 801,85 801,95 784,96" fill="#221a15"/>
<polygon points="784,96 801,95 801,130 784,130" fill="#2e2e2e"/>
<polygon points="784,130 801,130 801,188 784,189" fill="#231f1c"/>
<polygon points="801,85 849,85 849,92 801,91" fill="#383838"/>
<polygon points="801,91 849,92 849,130 801,130" fill="#221a15"/>
<polygon points="849,85 873,85 873,93 849,92" fill="#767676"/>
<polygon points="873,85 898,85 898,90 873,90" fill="#6e6e6e"/>
<polygon points="873,90 898,90 898,135 873,135" fill="#4b3d2d"/>
<polygon points="898,85 914,85 914,96 898,96" fill="#4b3d2d"/>
<polygon points="898,96 914,96 914,129 898,129" fill="#727272"/>
<polygon points="898,129 914,129 914,161 898,161" fill="#40362a"/>
<polygon points="898,161 914,161 914,200 898,200" fill="#6e6e6e"/>
<polygon points="784,188 900,186 914,190 914,215 784,215" fill="#6c6c6c"/>
<polygon points="784,199 798,205 784,211" fill="#4b3d2d"/>
<polygon points="800,206 826,198 852,207 826,215" fill="#4b3d2d"/>
<polygon points="862,206 881,198 900,206 881,214" fill="#4b3d2d"/>
<polygon points="900,206 914,199 914,211" fill="#4b3d2d"/>
<polygon points="784,211 914,211 914,215 784,215" fill="#7a7a7a"/>
<defs><radialGradient id="sg" cx="0.5" cy="0.5" r="0.5"><stop offset="0" stop-color="#da845f"/><stop offset="0.75" stop-color="#d27d5c"/><stop offset="1" stop-color="#a85e48"/></radialGradient>
<filter id="nz" x="0" y="0" width="1" height="1"><feTurbulence type="fractalNoise" baseFrequency="0.8" numOctaves="2" seed="3"/><feColorMatrix values="0 0 0 0 0.3  0 0 0 0 0.14  0 0 0 0 0.08  0 0 0 1.4 -0.6"/><feComposite in2="SourceGraphic" operator="in"/></filter></defs>
<circle cx="849.5" cy="149.6" r="60.8" fill="url(#sg)"/>
<circle cx="849.5" cy="149.6" r="60.8" fill="#000" filter="url(#nz)"/>
<clipPath id="sc"><circle cx="849.5" cy="149.6" r="60.8"/></clipPath>
<g clip-path="url(#sc)"><path d="M841.01 209.80 L841.65 209.89 L842.30 209.97 L842.98 210.05 L843.66 210.12 L844.36 210.18 L845.07 210.23 L845.80 210.28 L846.53 210.32 L847.26 210.35 L848.01 210.37 L848.75 210.38 L849.50 210.38 L850.25 210.38 L850.99 210.37 L851.74 210.35 L852.47 210.32 L853.20 210.28 L853.93 210.23 L854.64 210.18 L855.34 210.12 L856.02 210.05 L856.70 209.97 L857.35 209.89 L857.99 209.80 M830.52 207.35 L831.11 207.55 L831.74 207.75 L832.41 207.93 L833.13 208.12 L833.87 208.29 L834.66 208.46 L835.48 208.61 L836.33 208.76 L837.22 208.90 L838.13 209.03 L839.08 209.15 L840.04 209.26 L841.03 209.36 L842.05 209.45 L843.08 209.53 L844.12 209.59 L845.18 209.65 L846.25 209.69 L847.33 209.72 L848.41 209.74 L849.50 209.74 L850.59 209.74 L851.67 209.72 L852.75 209.69 L853.82 209.65 L854.88 209.59 L855.92 209.53 L856.95 209.45 L857.97 209.36 L858.96 209.26 L859.92 209.15 L860.87 209.03 L861.78 208.90 L862.67 208.76 L863.52 208.61 L864.34 208.46 L865.13 208.29 L865.87 208.12 L866.59 207.93 L867.26 207.75 L867.89 207.55 L868.48 207.35 M822.97 204.30 L823.54 204.57 L824.16 204.83 L824.85 205.09 L825.59 205.34 L826.38 205.58 L827.24 205.82 L828.14 206.05 L829.10 206.27 L830.11 206.48 L831.17 206.67 L832.27 206.86 L833.42 207.04 L834.60 207.20 L835.83 207.36 L837.09 207.50 L838.39 207.62 L839.71 207.74 L841.06 207.83 L842.43 207.92 L843.82 207.99 L845.23 208.04 L846.65 208.08 L848.07 208.10 L849.50 208.11 L850.93 208.10 L852.35 208.08 L853.77 208.04 L855.18 207.99 L856.57 207.92 L857.94 207.83 L859.29 207.74 L860.61 207.62 L861.91 207.50 L863.17 207.36 L864.40 207.20 L865.58 207.04 L866.73 206.86 L867.83 206.67 L868.89 206.48 L869.90 206.27 L870.86 206.05 L871.76 205.82 L872.62 205.58 L873.41 205.34 L874.15 205.09 L874.84 204.83 L875.46 204.57 L876.03 204.30 M816.06 200.38 L816.57 200.69 L817.16 201.00 L817.81 201.31 L818.55 201.61 L819.35 201.91 L820.23 202.19 L821.18 202.48 L822.20 202.75 L823.28 203.01 L824.44 203.27 L825.66 203.51 L826.94 203.74 L828.28 203.96 L829.68 204.17 L831.13 204.36 L832.63 204.54 L834.18 204.71 L835.77 204.86 L837.40 204.99 L839.06 205.10 L840.76 205.20 L842.47 205.28 L844.21 205.35 L845.97 205.39 L847.73 205.42 L849.50 205.43 L851.27 205.42 L853.03 205.39 L854.79 205.35 L856.53 205.28 L858.24 205.20 L859.94 205.10 L861.60 204.99 L863.23 204.86 L864.82 204.71 L866.37 204.54 L867.87 204.36 L869.32 204.17 L870.72 203.96 L872.06 203.74 L873.34 203.51 L874.56 203.27 L875.72 203.01 L876.80 202.75 L877.82 202.48 L878.77 202.19 L879.65 201.91 L880.45 201.61 L881.19 201.31 L881.84 201.00 L882.43 200.69 L882.94 200.38 M809.64 195.49 L810.02 195.83 L810.49 196.17 L811.04 196.50 L811.68 196.84 L812.42 197.17 L813.24 197.49 L814.14 197.81 L815.14 198.12 L816.22 198.43 L817.39 198.72 L818.64 199.01 L819.98 199.29 L821.39 199.55 L822.88 199.81 L824.44 200.05 L826.08 200.28 L827.78 200.49 L829.54 200.69 L831.36 200.87 L833.24 201.03 L835.16 201.18 L837.13 201.30 L839.13 201.41 L841.17 201.50 L843.23 201.57 L845.31 201.62 L847.40 201.65 L849.50 201.66 L851.60 201.65 L853.69 201.62 L855.77 201.57 L857.83 201.50 L859.87 201.41 L861.87 201.30 L863.84 201.18 L865.76 201.03 L867.64 200.87 L869.46 200.69 L871.22 200.49 L872.92 200.28 L874.56 200.05 L876.12 199.81 L877.61 199.55 L879.02 199.29 L880.36 199.01 L881.61 198.72 L882.78 198.43 L883.86 198.12 L884.86 197.81 L885.76 197.49 L886.58 197.17 L887.32 196.84 L887.96 196.50 L888.51 196.17 L888.98 195.83 L889.36 195.49 M804.51 190.49 L804.90 190.83 L805.39 191.17 L805.97 191.51 L806.66 191.85 L807.45 192.18 L808.34 192.51 L809.34 192.84 L810.43 193.15 L811.63 193.47 L812.93 193.77 L814.33 194.06 L815.82 194.35 L817.41 194.62 L819.09 194.88 L820.86 195.13 L822.71 195.37 L824.64 195.59 L826.64 195.79 L828.72 195.98 L830.86 196.15 L833.06 196.30 L835.31 196.43 L837.60 196.55 L839.94 196.64 L842.30 196.71 L844.69 196.76 L847.09 196.80 L849.50 196.81 L851.91 196.80 L854.31 196.76 L856.70 196.71 L859.06 196.64 L861.40 196.55 L863.69 196.43 L865.94 196.30 L868.14 196.15 L870.28 195.98 L872.36 195.79 L874.36 195.59 L876.29 195.37 L878.14 195.13 L879.91 194.88 L881.59 194.62 L883.18 194.35 L884.67 194.06 L886.07 193.77 L887.37 193.47 L888.57 193.15 L889.66 192.84 L890.66 192.51 L891.55 192.18 L892.34 191.85 L893.03 191.51 L893.61 191.17 L894.10 190.83 L894.49 190.49 M799.70 184.49 L799.98 184.81 L800.37 185.13 L800.87 185.46 L801.47 185.78 L802.19 186.10 L803.03 186.42 L803.98 186.73 L805.04 187.04 L806.22 187.35 L807.52 187.65 L808.92 187.94 L810.45 188.23 L812.08 188.50 L813.82 188.76 L815.66 189.02 L817.61 189.26 L819.65 189.49 L821.79 189.70 L824.01 189.90 L826.32 190.08 L828.69 190.25 L831.14 190.39 L833.65 190.52 L836.21 190.63 L838.81 190.72 L841.45 190.80 L844.12 190.85 L846.81 190.88 L849.50 190.89 L852.19 190.88 L854.88 190.85 L857.55 190.80 L860.19 190.72 L862.79 190.63 L865.35 190.52 L867.86 190.39 L870.31 190.25 L872.68 190.08 L874.99 189.90 L877.21 189.70 L879.35 189.49 L881.39 189.26 L883.34 189.02 L885.18 188.76 L886.92 188.50 L888.55 188.23 L890.08 187.94 L891.48 187.65 L892.78 187.35 L893.96 187.04 L895.02 186.73 L895.97 186.42 L896.81 186.10 L897.53 185.78 L898.13 185.46 L898.63 185.13 L899.02 184.81 L899.30 184.49 M795.73 177.96 L795.88 178.24 L796.15 178.53 L796.52 178.82 L797.02 179.10 L797.64 179.39 L798.38 179.68 L799.25 179.96 L800.24 180.24 L801.36 180.52 L802.60 180.79 L803.98 181.06 L805.48 181.32 L807.10 181.58 L808.85 181.82 L810.71 182.06 L812.70 182.29 L814.80 182.51 L817.00 182.71 L819.32 182.91 L821.73 183.09 L824.23 183.25 L826.81 183.40 L829.47 183.54 L832.20 183.65 L834.99 183.75 L837.83 183.84 L840.71 183.90 L843.62 183.95 L846.56 183.98 L849.50 183.99 L852.44 183.98 L855.38 183.95 L858.29 183.90 L861.17 183.84 L864.01 183.75 L866.80 183.65 L869.53 183.54 L872.19 183.40 L874.77 183.25 L877.27 183.09 L879.68 182.91 L882.00 182.71 L884.20 182.51 L886.30 182.29 L888.29 182.06 L890.15 181.82 L891.90 181.58 L893.52 181.32 L895.02 181.06 L896.40 180.79 L897.64 180.52 L898.76 180.24 L899.75 179.96 L900.62 179.68 L901.36 179.39 L901.98 179.10 L902.48 178.82 L902.85 178.53 L903.12 178.24 L903.27 177.96 M792.70 171.29 L792.83 171.52 L793.07 171.75 L793.44 171.98 L793.94 172.22 L794.56 172.45 L795.31 172.68 L796.20 172.91 L797.23 173.14 L798.38 173.37 L799.68 173.59 L801.11 173.81 L802.68 174.03 L804.39 174.24 L806.22 174.44 L808.19 174.63 L810.29 174.82 L812.51 175.00 L814.85 175.17 L817.30 175.33 L819.86 175.48 L822.52 175.61 L825.27 175.74 L828.11 175.85 L831.02 175.94 L834.00 176.03 L837.03 176.10 L840.11 176.15 L843.22 176.19 L846.35 176.21 L849.50 176.22 L852.65 176.21 L855.78 176.19 L858.89 176.15 L861.97 176.10 L865.00 176.03 L867.98 175.94 L870.89 175.85 L873.73 175.74 L876.48 175.61 L879.14 175.48 L881.70 175.33 L884.15 175.17 L886.49 175.00 L888.71 174.82 L890.81 174.63 L892.78 174.44 L894.61 174.24 L896.32 174.03 L897.89 173.81 L899.32 173.59 L900.62 173.37 L901.77 173.14 L902.80 172.91 L903.69 172.68 L904.44 172.45 L905.06 172.22 L905.56 171.98 L905.93 171.75 L906.17 171.52 L906.30 171.29 M790.50 164.27 L790.60 164.43 L790.83 164.59 L791.19 164.75 L791.68 164.92 L792.31 165.08 L793.07 165.24 L793.97 165.41 L795.01 165.57 L796.20 165.73 L797.53 165.89 L799.00 166.04 L800.62 166.20 L802.38 166.34 L804.29 166.49 L806.33 166.63 L808.50 166.76 L810.81 166.89 L813.25 167.01 L815.80 167.12 L818.47 167.23 L821.25 167.32 L824.13 167.41 L827.09 167.49 L830.14 167.56 L833.25 167.62 L836.43 167.67 L839.66 167.71 L842.92 167.73 L846.20 167.75 L849.50 167.76 L852.80 167.75 L856.08 167.73 L859.34 167.71 L862.57 167.67 L865.75 167.62 L868.86 167.56 L871.91 167.49 L874.87 167.41 L877.75 167.32 L880.53 167.23 L883.20 167.12 L885.75 167.01 L888.19 166.89 L890.50 166.76 L892.67 166.63 L894.71 166.49 L896.62 166.34 L898.38 166.20 L900.00 166.04 L901.47 165.89 L902.80 165.73 L903.99 165.57 L905.03 165.41 L905.93 165.24 L906.69 165.08 L907.32 164.92 L907.81 164.75 L908.17 164.59 L908.40 164.43 L908.50 164.27 M789.15 156.99 L789.25 157.08 L789.47 157.16 L789.82 157.25 L790.31 157.33 L790.93 157.42 L791.70 157.50 L792.60 157.58 L793.66 157.67 L794.86 157.75 L796.21 157.83 L797.71 157.91 L799.36 157.99 L801.15 158.07 L803.10 158.14 L805.18 158.22 L807.41 158.29 L809.77 158.35 L812.26 158.41 L814.88 158.47 L817.62 158.53 L820.47 158.58 L823.42 158.62 L826.47 158.67 L829.60 158.70 L832.80 158.73 L836.06 158.76 L839.38 158.78 L842.73 158.79 L846.11 158.80 L849.50 158.80 L852.89 158.80 L856.27 158.79 L859.62 158.78 L862.94 158.76 L866.20 158.73 L869.40 158.70 L872.53 158.67 L875.58 158.62 L878.53 158.58 L881.38 158.53 L884.12 158.47 L886.74 158.41 L889.23 158.35 L891.59 158.29 L893.82 158.22 L895.90 158.14 L897.85 158.07 L899.64 157.99 L901.29 157.91 L902.79 157.83 L904.14 157.75 L905.34 157.67 L906.40 157.58 L907.30 157.50 L908.07 157.42 L908.69 157.33 L909.18 157.25 L909.53 157.16 L909.75 157.08 L909.85 156.99 M788.70 149.60 L788.79 149.60 L789.01 149.60 L789.36 149.60 L789.84 149.60 L790.47 149.60 L791.23 149.60 L792.15 149.60 L793.20 149.60 L794.41 149.60 L795.77 149.60 L797.28 149.60 L798.93 149.60 L800.74 149.60 L802.70 149.60 L804.80 149.60 L807.04 149.60 L809.42 149.60 L811.93 149.60 L814.57 149.60 L817.33 149.60 L820.21 149.60 L823.18 149.60 L826.26 149.60 L829.41 149.60 L832.64 149.60 L835.94 149.60 L839.28 149.60 L842.67 149.60 L846.08 149.60 L849.50 149.60 L852.92 149.60 L856.33 149.60 L859.72 149.60 L863.06 149.60 L866.36 149.60 L869.59 149.60 L872.74 149.60 L875.82 149.60 L878.79 149.60 L881.67 149.60 L884.43 149.60 L887.07 149.60 L889.58 149.60 L891.96 149.60 L894.20 149.60 L896.30 149.60 L898.26 149.60 L900.07 149.60 L901.72 149.60 L903.23 149.60 L904.59 149.60 L905.80 149.60 L906.85 149.60 L907.77 149.60 L908.53 149.60 L909.16 149.60 L909.64 149.60 L909.99 149.60 L910.21 149.60 L910.30 149.60 M789.15 142.21 L789.25 142.12 L789.47 142.04 L789.82 141.95 L790.31 141.87 L790.93 141.78 L791.70 141.70 L792.60 141.62 L793.66 141.53 L794.86 141.45 L796.21 141.37 L797.71 141.29 L799.36 141.21 L801.15 141.13 L803.10 141.06 L805.18 140.98 L807.41 140.91 L809.77 140.85 L812.26 140.79 L814.88 140.73 L817.62 140.67 L820.47 140.62 L823.42 140.58 L826.47 140.53 L829.60 140.50 L832.80 140.47 L836.06 140.44 L839.38 140.42 L842.73 140.41 L846.11 140.40 L849.50 140.40 L852.89 140.40 L856.27 140.41 L859.62 140.42 L862.94 140.44 L866.20 140.47 L869.40 140.50 L872.53 140.53 L875.58 140.58 L878.53 140.62 L881.38 140.67 L884.12 140.73 L886.74 140.79 L889.23 140.85 L891.59 140.91 L893.82 140.98 L895.90 141.06 L897.85 141.13 L899.64 141.21 L901.29 141.29 L902.79 141.37 L904.14 141.45 L905.34 141.53 L906.40 141.62 L907.30 141.70 L908.07 141.78 L908.69 141.87 L909.18 141.95 L909.53 142.04 L909.75 142.12 L909.85 142.21 M790.50 134.93 L790.60 134.77 L790.83 134.61 L791.19 134.45 L791.68 134.28 L792.31 134.12 L793.07 133.96 L793.97 133.79 L795.01 133.63 L796.20 133.47 L797.53 133.31 L799.00 133.16 L800.62 133.00 L802.38 132.86 L804.29 132.71 L806.33 132.57 L808.50 132.44 L810.81 132.31 L813.25 132.19 L815.80 132.08 L818.47 131.97 L821.25 131.88 L824.13 131.79 L827.09 131.71 L830.14 131.64 L833.25 131.58 L836.43 131.53 L839.66 131.49 L842.92 131.47 L846.20 131.45 L849.50 131.44 L852.80 131.45 L856.08 131.47 L859.34 131.49 L862.57 131.53 L865.75 131.58 L868.86 131.64 L871.91 131.71 L874.87 131.79 L877.75 131.88 L880.53 131.97 L883.20 132.08 L885.75 132.19 L888.19 132.31 L890.50 132.44 L892.67 132.57 L894.71 132.71 L896.62 132.86 L898.38 133.00 L900.00 133.16 L901.47 133.31 L902.80 133.47 L903.99 133.63 L905.03 133.79 L905.93 133.96 L906.69 134.12 L907.32 134.28 L907.81 134.45 L908.17 134.61 L908.40 134.77 L908.50 134.93 M792.70 127.91 L792.83 127.68 L793.07 127.45 L793.44 127.22 L793.94 126.98 L794.56 126.75 L795.31 126.52 L796.20 126.29 L797.23 126.06 L798.38 125.83 L799.68 125.61 L801.11 125.39 L802.68 125.17 L804.39 124.96 L806.22 124.76 L808.19 124.57 L810.29 124.38 L812.51 124.20 L814.85 124.03 L817.30 123.87 L819.86 123.72 L822.52 123.59 L825.27 123.46 L828.11 123.35 L831.02 123.26 L834.00 123.17 L837.03 123.10 L840.11 123.05 L843.22 123.01 L846.35 122.99 L849.50 122.98 L852.65 122.99 L855.78 123.01 L858.89 123.05 L861.97 123.10 L865.00 123.17 L867.98 123.26 L870.89 123.35 L873.73 123.46 L876.48 123.59 L879.14 123.72 L881.70 123.87 L884.15 124.03 L886.49 124.20 L888.71 124.38 L890.81 124.57 L892.78 124.76 L894.61 124.96 L896.32 125.17 L897.89 125.39 L899.32 125.61 L900.62 125.83 L901.77 126.06 L902.80 126.29 L903.69 126.52 L904.44 126.75 L905.06 126.98 L905.56 127.22 L905.93 127.45 L906.17 127.68 L906.30 127.91 M795.73 121.24 L795.88 120.96 L796.15 120.67 L796.52 120.38 L797.02 120.10 L797.64 119.81 L798.38 119.52 L799.25 119.24 L800.24 118.96 L801.36 118.68 L802.60 118.41 L803.98 118.14 L805.48 117.88 L807.10 117.62 L808.85 117.38 L810.71 117.14 L812.70 116.91 L814.80 116.69 L817.00 116.49 L819.32 116.29 L821.73 116.11 L824.23 115.95 L826.81 115.80 L829.47 115.66 L832.20 115.55 L834.99 115.45 L837.83 115.36 L840.71 115.30 L843.62 115.25 L846.56 115.22 L849.50 115.21 L852.44 115.22 L855.38 115.25 L858.29 115.30 L861.17 115.36 L864.01 115.45 L866.80 115.55 L869.53 115.66 L872.19 115.80 L874.77 115.95 L877.27 116.11 L879.68 116.29 L882.00 116.49 L884.20 116.69 L886.30 116.91 L888.29 117.14 L890.15 117.38 L891.90 117.62 L893.52 117.88 L895.02 118.14 L896.40 118.41 L897.64 118.68 L898.76 118.96 L899.75 119.24 L900.62 119.52 L901.36 119.81 L901.98 120.10 L902.48 120.38 L902.85 120.67 L903.12 120.96 L903.27 121.24 M799.70 114.71 L799.98 114.39 L800.37 114.07 L800.87 113.74 L801.47 113.42 L802.19 113.10 L803.03 112.78 L803.98 112.47 L805.04 112.16 L806.22 111.85 L807.52 111.55 L808.92 111.26 L810.45 110.97 L812.08 110.70 L813.82 110.44 L815.66 110.18 L817.61 109.94 L819.65 109.71 L821.79 109.50 L824.01 109.30 L826.32 109.12 L828.69 108.95 L831.14 108.81 L833.65 108.68 L836.21 108.57 L838.81 108.48 L841.45 108.40 L844.12 108.35 L846.81 108.32 L849.50 108.31 L852.19 108.32 L854.88 108.35 L857.55 108.40 L860.19 108.48 L862.79 108.57 L865.35 108.68 L867.86 108.81 L870.31 108.95 L872.68 109.12 L874.99 109.30 L877.21 109.50 L879.35 109.71 L881.39 109.94 L883.34 110.18 L885.18 110.44 L886.92 110.70 L888.55 110.97 L890.08 111.26 L891.48 111.55 L892.78 111.85 L893.96 112.16 L895.02 112.47 L895.97 112.78 L896.81 113.10 L897.53 113.42 L898.13 113.74 L898.63 114.07 L899.02 114.39 L899.30 114.71 M804.51 108.71 L804.90 108.37 L805.39 108.03 L805.97 107.69 L806.66 107.35 L807.45 107.02 L808.34 106.69 L809.34 106.36 L810.43 106.05 L811.63 105.73 L812.93 105.43 L814.33 105.14 L815.82 104.85 L817.41 104.58 L819.09 104.32 L820.86 104.07 L822.71 103.83 L824.64 103.61 L826.64 103.41 L828.72 103.22 L830.86 103.05 L833.06 102.90 L835.31 102.77 L837.60 102.65 L839.94 102.56 L842.30 102.49 L844.69 102.44 L847.09 102.40 L849.50 102.39 L851.91 102.40 L854.31 102.44 L856.70 102.49 L859.06 102.56 L861.40 102.65 L863.69 102.77 L865.94 102.90 L868.14 103.05 L870.28 103.22 L872.36 103.41 L874.36 103.61 L876.29 103.83 L878.14 104.07 L879.91 104.32 L881.59 104.58 L883.18 104.85 L884.67 105.14 L886.07 105.43 L887.37 105.73 L888.57 106.05 L889.66 106.36 L890.66 106.69 L891.55 107.02 L892.34 107.35 L893.03 107.69 L893.61 108.03 L894.10 108.37 L894.49 108.71 M809.64 103.71 L810.02 103.37 L810.49 103.03 L811.04 102.70 L811.68 102.36 L812.42 102.03 L813.24 101.71 L814.14 101.39 L815.14 101.08 L816.22 100.77 L817.39 100.48 L818.64 100.19 L819.98 99.91 L821.39 99.65 L822.88 99.39 L824.44 99.15 L826.08 98.92 L827.78 98.71 L829.54 98.51 L831.36 98.33 L833.24 98.17 L835.16 98.02 L837.13 97.90 L839.13 97.79 L841.17 97.70 L843.23 97.63 L845.31 97.58 L847.40 97.55 L849.50 97.54 L851.60 97.55 L853.69 97.58 L855.77 97.63 L857.83 97.70 L859.87 97.79 L861.87 97.90 L863.84 98.02 L865.76 98.17 L867.64 98.33 L869.46 98.51 L871.22 98.71 L872.92 98.92 L874.56 99.15 L876.12 99.39 L877.61 99.65 L879.02 99.91 L880.36 100.19 L881.61 100.48 L882.78 100.77 L883.86 101.08 L884.86 101.39 L885.76 101.71 L886.58 102.03 L887.32 102.36 L887.96 102.70 L888.51 103.03 L888.98 103.37 L889.36 103.71 M816.06 98.82 L816.57 98.51 L817.16 98.20 L817.81 97.89 L818.55 97.59 L819.35 97.29 L820.23 97.01 L821.18 96.72 L822.20 96.45 L823.28 96.19 L824.44 95.93 L825.66 95.69 L826.94 95.46 L828.28 95.24 L829.68 95.03 L831.13 94.84 L832.63 94.66 L834.18 94.49 L835.77 94.34 L837.40 94.21 L839.06 94.10 L840.76 94.00 L842.47 93.92 L844.21 93.85 L845.97 93.81 L847.73 93.78 L849.50 93.77 L851.27 93.78 L853.03 93.81 L854.79 93.85 L856.53 93.92 L858.24 94.00 L859.94 94.10 L861.60 94.21 L863.23 94.34 L864.82 94.49 L866.37 94.66 L867.87 94.84 L869.32 95.03 L870.72 95.24 L872.06 95.46 L873.34 95.69 L874.56 95.93 L875.72 96.19 L876.80 96.45 L877.82 96.72 L878.77 97.01 L879.65 97.29 L880.45 97.59 L881.19 97.89 L881.84 98.20 L882.43 98.51 L882.94 98.82 M822.97 94.90 L823.54 94.63 L824.16 94.37 L824.85 94.11 L825.59 93.86 L826.38 93.62 L827.24 93.38 L828.14 93.15 L829.10 92.93 L830.11 92.72 L831.17 92.53 L832.27 92.34 L833.42 92.16 L834.60 92.00 L835.83 91.84 L837.09 91.70 L838.39 91.58 L839.71 91.46 L841.06 91.37 L842.43 91.28 L843.82 91.21 L845.23 91.16 L846.65 91.12 L848.07 91.10 L849.50 91.09 L850.93 91.10 L852.35 91.12 L853.77 91.16 L855.18 91.21 L856.57 91.28 L857.94 91.37 L859.29 91.46 L860.61 91.58 L861.91 91.70 L863.17 91.84 L864.40 92.00 L865.58 92.16 L866.73 92.34 L867.83 92.53 L868.89 92.72 L869.90 92.93 L870.86 93.15 L871.76 93.38 L872.62 93.62 L873.41 93.86 L874.15 94.11 L874.84 94.37 L875.46 94.63 L876.03 94.90 M830.52 91.85 L831.11 91.65 L831.74 91.45 L832.41 91.27 L833.13 91.08 L833.87 90.91 L834.66 90.74 L835.48 90.59 L836.33 90.44 L837.22 90.30 L838.13 90.17 L839.08 90.05 L840.04 89.94 L841.03 89.84 L842.05 89.75 L843.08 89.67 L844.12 89.61 L845.18 89.55 L846.25 89.51 L847.33 89.48 L848.41 89.46 L849.50 89.46 L850.59 89.46 L851.67 89.48 L852.75 89.51 L853.82 89.55 L854.88 89.61 L855.92 89.67 L856.95 89.75 L857.97 89.84 L858.96 89.94 L859.92 90.05 L860.87 90.17 L861.78 90.30 L862.67 90.44 L863.52 90.59 L864.34 90.74 L865.13 90.91 L865.87 91.08 L866.59 91.27 L867.26 91.45 L867.89 91.65 L868.48 91.85 M841.01 89.40 L841.65 89.31 L842.30 89.23 L842.98 89.15 L843.66 89.08 L844.36 89.02 L845.07 88.97 L845.80 88.92 L846.53 88.88 L847.26 88.85 L848.01 88.83 L848.75 88.82 L849.50 88.82 L850.25 88.82 L850.99 88.83 L851.74 88.85 L852.47 88.88 L853.20 88.92 L853.93 88.97 L854.64 89.02 L855.34 89.08 L856.02 89.15 L856.70 89.23 L857.35 89.31 L857.99 89.40 M845.10 209.84 L841.66 209.89 M847.98 210.08 L846.78 210.33 M851.02 210.08 L852.22 210.33 M853.90 209.84 L857.34 209.89 M839.42 209.52 L834.95 208.51 M844.14 210.16 L841.72 209.42 M849.50 210.38 L849.50 209.74 M854.86 210.16 L857.28 209.42 M859.58 209.52 L864.05 208.51 M832.21 207.88 L826.98 205.75 M838.15 209.03 L834.63 207.21 M845.54 209.66 L844.30 208.01 M853.46 209.66 L854.70 208.01 M860.85 209.03 L864.37 207.21 M866.79 207.88 L872.02 205.75 M824.19 204.84 L818.58 201.62 M830.48 206.55 L826.11 203.60 M839.28 207.70 L836.87 204.95 M849.50 208.11 L849.50 205.43 M859.72 207.70 L862.13 204.95 M868.52 206.55 L872.89 203.60 M874.81 204.84 L880.42 201.62 M816.25 200.50 L810.69 196.30 M821.88 202.67 L817.03 198.64 M831.16 204.37 L827.81 200.49 M843.06 205.31 L841.87 201.53 M855.94 205.31 L857.13 201.53 M867.84 204.37 L871.19 200.49 M877.12 202.67 L881.97 198.64 M882.75 200.50 L888.31 196.30 M813.27 197.50 L808.38 192.52 M821.92 199.65 L818.00 194.72 M834.54 201.13 L832.35 196.25 M849.50 201.66 L849.50 196.81 M864.46 201.13 L866.65 196.25 M877.08 199.65 L881.00 194.72 M885.73 197.50 L890.62 192.52 M805.60 191.30 L801.08 185.58 M812.53 193.68 L808.49 187.85 M824.68 195.59 L821.83 189.70 M840.74 196.67 L839.71 190.75 M858.26 196.67 L859.29 190.75 M874.32 195.59 L877.17 189.70 M886.47 193.68 L890.51 187.85 M893.40 191.30 L897.92 185.58 M799.65 184.40 L795.83 178.17 M804.02 186.75 L800.28 180.25 M814.47 188.86 L811.42 182.15 M830.35 190.35 L828.61 183.49 M849.50 190.89 L849.50 183.99 M868.65 190.35 L870.39 183.49 M884.53 188.86 L887.58 182.15 M894.98 186.75 L898.72 180.25 M899.35 184.40 L903.17 178.17 M797.24 179.21 L794.16 172.31 M805.01 181.24 L802.20 173.96 M819.36 182.91 L817.35 175.33 M838.81 183.86 L838.07 176.12 M860.19 183.86 L860.93 176.12 M879.64 182.91 L881.65 175.33 M893.99 181.24 L896.80 173.96 M901.76 179.21 L904.84 172.31 M792.78 171.46 L790.56 164.38 M797.27 173.15 L795.06 165.58 M808.93 174.70 L807.09 166.68 M827.19 175.81 L826.13 167.47 M849.50 176.22 L849.50 167.76 M871.81 175.81 L872.87 167.47 M890.07 174.70 L891.91 166.68 M901.73 173.15 L903.94 165.58 M906.22 171.46 L908.44 164.38 M791.90 164.98 L790.53 157.36 M800.12 166.15 L798.85 157.97 M815.85 167.12 L814.94 158.47 M837.52 167.68 L837.18 158.77 M861.48 167.68 L861.82 158.77 M883.15 167.12 L884.06 158.47 M898.88 166.15 L900.15 157.97 M907.10 164.98 L908.47 157.36 M789.21 157.05 L788.75 149.60 M793.70 157.67 L793.25 149.60 M805.97 158.24 L805.59 149.60 M825.48 158.65 L825.26 149.60 M849.50 158.80 L849.50 149.60 M873.52 158.65 L873.74 149.60 M893.03 158.24 L893.41 149.60 M905.30 157.67 L905.75 149.60 M909.79 157.05 L910.25 149.60 M790.06 149.60 L790.53 141.84 M798.42 149.60 L798.85 141.23 M814.63 149.60 L814.94 140.73 M837.07 149.60 L837.18 140.43 M861.93 149.60 L861.82 140.43 M884.37 149.60 L884.06 140.73 M900.58 149.60 L900.15 141.23 M908.94 149.60 L908.47 141.84 M789.21 142.15 L790.56 134.82 M793.70 141.53 L795.06 133.62 M805.97 140.96 L807.09 132.52 M825.48 140.55 L826.13 131.73 M849.50 140.40 L849.50 131.44 M873.52 140.55 L872.87 131.73 M893.03 140.96 L891.91 132.52 M905.30 141.53 L903.94 133.62 M909.79 142.15 L908.44 134.82 M791.90 134.22 L794.16 126.89 M800.12 133.05 L802.20 125.24 M815.85 132.08 L817.35 123.87 M837.52 131.52 L838.07 123.08 M861.48 131.52 L860.93 123.08 M883.15 132.08 L881.65 123.87 M898.88 133.05 L896.80 125.24 M907.10 134.22 L904.84 126.89 M792.78 127.74 L795.83 121.03 M797.27 126.05 L800.28 118.95 M808.93 124.50 L811.42 117.05 M827.19 123.39 L828.61 115.71 M849.50 122.98 L849.50 115.21 M871.81 123.39 L870.39 115.71 M890.07 124.50 L887.58 117.05 M901.73 126.05 L898.72 118.95 M906.22 127.74 L903.17 121.03 M797.24 119.99 L801.08 113.62 M805.01 117.96 L808.49 111.35 M819.36 116.29 L821.83 109.50 M838.81 115.34 L839.71 108.45 M860.19 115.34 L859.29 108.45 M879.64 116.29 L877.17 109.50 M893.99 117.96 L890.51 111.35 M901.76 119.99 L897.92 113.62 M799.65 114.80 L804.15 109.14 M804.02 112.45 L808.38 106.68 M814.47 110.34 L818.00 104.48 M830.35 108.85 L832.35 102.95 M849.50 108.31 L849.50 102.39 M868.65 108.85 L866.65 102.95 M884.53 110.34 L881.00 104.48 M894.98 112.45 L890.62 106.68 M899.35 114.80 L894.85 109.14 M805.60 107.90 L810.69 102.90 M812.53 105.52 L817.03 100.56 M824.68 103.61 L827.81 98.71 M840.74 102.53 L841.87 97.67 M858.26 102.53 L857.13 97.67 M874.32 103.61 L871.19 98.71 M886.47 105.52 L881.97 100.56 M893.40 107.90 L888.31 102.90 M813.27 101.70 L818.58 97.58 M821.92 99.55 L826.11 95.60 M834.54 98.07 L836.87 94.25 M849.50 97.54 L849.50 93.77 M864.46 98.07 L862.13 94.25 M877.08 99.55 L872.89 95.60 M885.73 101.70 L880.42 97.58 M816.25 98.70 L822.17 95.34 M821.88 96.53 L826.98 93.45 M831.16 94.83 L834.63 91.99 M843.06 93.89 L844.30 91.19 M855.94 93.89 L854.70 91.19 M867.84 94.83 L864.37 91.99 M877.12 96.53 L872.02 93.45 M882.75 98.70 L876.83 95.34 M824.19 94.36 L830.00 92.05 M830.48 92.65 L834.95 90.69 M839.28 91.50 L841.72 89.78 M849.50 91.09 L849.50 89.46 M859.72 91.50 L857.28 89.78 M868.52 92.65 L864.05 90.69 M874.81 94.36 L869.00 92.05 M832.21 91.32 L837.48 90.12 M838.15 90.17 L841.66 89.31 M845.54 89.54 L846.78 88.87 M853.46 89.54 L852.22 88.87 M860.85 90.17 L857.34 89.31 M866.79 91.32 L861.52 90.12 M844.14 89.04 L846.50 89.21 M849.50 88.82 L849.50 89.09 M854.86 89.04 L852.50 89.21" fill="none" stroke="#ece2dc" stroke-width="1.15" opacity="0.8"/></g>
</g></svg>

<div class="hdr" style="left:437px;top:228px;width:480px;height:22px;"></div>
<svg style="left:442px;top:236px" width="9" height="6" viewBox="0 0 9 6"><path d="M0.5 0.5 L8 0.5 L4.25 5 Z" fill="#333"/></svg>
<div class="hdr" style="left:437px;top:513px;width:480px;height:22px;"></div>
<svg style="left:444px;top:519px" width="6" height="9" viewBox="0 0 6 9"><path d="M0.5 0.5 L5 4.5 L0.5 8.5 Z" fill="#333"/></svg>
<div class="hdr" style="left:437px;top:540px;width:480px;height:22px;"></div>
<svg style="left:444px;top:546px" width="6" height="9" viewBox="0 0 6 9"><path d="M0.5 0.5 L5 4.5 L0.5 8.5 Z" fill="#333"/></svg>

<!-- color icon -->
<svg style="left:438px;top:258px" width="26" height="24" viewBox="0 0 26 24"><g fill="none" stroke="#222a30" stroke-width="1.1"><path d="M16.3 7.2 A7.1 7.1 0 1 0 11.6 18.3"/><path d="M10.15 4.2 V11.3 L5.3 15.3 M10.15 11.3 L12.4 13.1"/><rect x="17.3" y="8.3" width="2.5" height="3.8" rx="1.2"/><rect x="14.5" y="12.1" width="8.2" height="2.3" rx="0.6"/><path d="M14.5 14.4 V19.6 L12.6 20.6 H21.6 L22.7 19.6 V14.4"/></g><g fill="#222a30"><rect x="16.8" y="18" width="1.1" height="1.1"/><rect x="19" y="18" width="1.1" height="1.1"/></g></svg>
<div class="a" style="left:571px;top:257px;width:91px;height:24px;background:#fff;"></div>
<div class="a" style="left:572px;top:258px;width:89px;height:21px;background:#b08474;border-top:2px solid #707070;border-left:2px solid #707070;"></div>
<div class="a" style="left:437px;top:292px;width:224px;height:1px;background:#a3a3a3;"></div>
<div class="a" style="left:677px;top:258px;width:1px;height:241px;background:#a3a3a3;"></div>
<div class="a" style="left:571px;top:447px;width:91px;height:24px;background:#fff;"></div>
<div class="a" style="left:572px;top:448px;width:89px;height:21px;background:#000;border-top:2px solid #6a6a6a;border-left:2px solid #6a6a6a;"></div>
<div class="a" style="left:826px;top:447px;width:91px;height:24px;background:#fff;"></div>
<div class="a" style="left:827px;top:448px;width:89px;height:21px;background:#c9c9c9;border-top:2px solid #707070;border-left:2px solid #707070;"></div>
<div class="trk" style="left:507px;top:373px;width:100px;"></div>
<svg style="left:507px;top:370px" width="7" height="12" viewBox="0 0 7 12"><path d="M0 0 H7 V8.6 L3.5 11.9 L0 8.6 Z" fill="#0a6cd6"/></svg>
<div class="a" style="left:510.0px;top:384px;width:1px;height:3px;background:#8e8e8e;"></div>
<div class="a" style="left:533.2px;top:384px;width:1px;height:3px;background:#8e8e8e;"></div>
<div class="a" style="left:556.5px;top:384px;width:1px;height:3px;background:#8e8e8e;"></div>
<div class="a" style="left:579.8px;top:384px;width:1px;height:3px;background:#8e8e8e;"></div>
<div class="a" style="left:603.0px;top:384px;width:1px;height:3px;background:#8e8e8e;"></div>
<div class="inp" style="left:628px;top:362px;width:33px;height:22px;"></div>
<div class="trk" style="left:507px;top:423px;width:100px;"></div>
<svg style="left:507px;top:420px" width="7" height="12" viewBox="0 0 7 12"><path d="M0 0 H7 V8.6 L3.5 11.9 L0 8.6 Z" fill="#0a6cd6"/></svg>
<div class="a" style="left:510.0px;top:434px;width:1px;height:3px;background:#8e8e8e;"></div>
<div class="a" style="left:533.2px;top:434px;width:1px;height:3px;background:#8e8e8e;"></div>
<div class="a" style="left:556.5px;top:434px;width:1px;height:3px;background:#8e8e8e;"></div>
<div class="a" style="left:579.8px;top:434px;width:1px;height:3px;background:#8e8e8e;"></div>
<div class="a" style="left:603.0px;top:434px;width:1px;height:3px;background:#8e8e8e;"></div>
<div class="inp" style="left:628px;top:412px;width:33px;height:22px;"></div>
<div class="trk" style="left:507px;top:490px;width:100px;"></div>
<svg style="left:507px;top:487px" width="7" height="12" viewBox="0 0 7 12"><path d="M0 0 H7 V8.6 L3.5 11.9 L0 8.6 Z" fill="#0a6cd6"/></svg>
<div class="a" style="left:510.0px;top:501px;width:1px;height:3px;background:#8e8e8e;"></div>
<div class="a" style="left:533.2px;top:501px;width:1px;height:3px;background:#8e8e8e;"></div>
<div class="a" style="left:556.5px;top:501px;width:1px;height:3px;background:#8e8e8e;"></div>
<div class="a" style="left:579.8px;top:501px;width:1px;height:3px;background:#8e8e8e;"></div>
<div class="a" style="left:603.0px;top:501px;width:1px;height:3px;background:#8e8e8e;"></div>
<div class="inp" style="left:628px;top:479px;width:33px;height:22px;"></div>
<div class="trk" style="left:762px;top:323px;width:100px;"></div>
<svg style="left:827px;top:320px" width="7" height="12" viewBox="0 0 7 12"><path d="M0 0 H7 V8.6 L3.5 11.9 L0 8.6 Z" fill="#0a6cd6"/></svg>
<div class="a" style="left:765.0px;top:334px;width:1px;height:3px;background:#8e8e8e;"></div>
<div class="a" style="left:788.2px;top:334px;width:1px;height:3px;background:#8e8e8e;"></div>
<div class="a" style="left:811.5px;top:334px;width:1px;height:3px;background:#8e8e8e;"></div>
<div class="a" style="left:834.8px;top:334px;width:1px;height:3px;background:#8e8e8e;"></div>
<div class="a" style="left:858.0px;top:334px;width:1px;height:3px;background:#8e8e8e;"></div>
<div class="inp" style="left:883px;top:312px;width:33px;height:22px;"></div>
<div class="trk" style="left:762px;top:373px;width:100px;"></div>
<svg style="left:827px;top:370px" width="7" height="12" viewBox="0 0 7 12"><path d="M0 0 H7 V8.6 L3.5 11.9 L0 8.6 Z" fill="#0a6cd6"/></svg>
<div class="a" style="left:765.0px;top:384px;width:1px;height:3px;background:#8e8e8e;"></div>
<div class="a" style="left:788.2px;top:384px;width:1px;height:3px;background:#8e8e8e;"></div>
<div class="a" style="left:811.5px;top:384px;width:1px;height:3px;background:#8e8e8e;"></div>
<div class="a" style="left:834.8px;top:384px;width:1px;height:3px;background:#8e8e8e;"></div>
<div class="a" style="left:858.0px;top:384px;width:1px;height:3px;background:#8e8e8e;"></div>
<div class="inp" style="left:883px;top:362px;width:33px;height:22px;"></div>
<div class="trk" style="left:762px;top:423px;width:100px;"></div>
<svg style="left:762px;top:420px" width="7" height="12" viewBox="0 0 7 12"><path d="M0 0 H7 V8.6 L3.5 11.9 L0 8.6 Z" fill="#0a6cd6"/></svg>
<div class="a" style="left:765.0px;top:434px;width:1px;height:3px;background:#8e8e8e;"></div>
<div class="a" style="left:788.2px;top:434px;width:1px;height:3px;background:#8e8e8e;"></div>
<div class="a" style="left:811.5px;top:434px;width:1px;height:3px;background:#8e8e8e;"></div>
<div class="a" style="left:834.8px;top:434px;width:1px;height:3px;background:#8e8e8e;"></div>
<div class="a" style="left:858.0px;top:434px;width:1px;height:3px;background:#8e8e8e;"></div>
<div class="inp" style="left:883px;top:412px;width:33px;height:22px;"></div>
<div class="trk" style="left:762px;top:490px;width:100px;"></div>
<svg style="left:762px;top:487px" width="7" height="12" viewBox="0 0 7 12"><path d="M0 0 H7 V8.6 L3.5 11.9 L0 8.6 Z" fill="#0a6cd6"/></svg>
<div class="a" style="left:765.0px;top:501px;width:1px;height:3px;background:#8e8e8e;"></div>
<div class="a" style="left:788.2px;top:501px;width:1px;height:3px;background:#8e8e8e;"></div>
<div class="a" style="left:811.5px;top:501px;width:1px;height:3px;background:#8e8e8e;"></div>
<div class="a" style="left:834.8px;top:501px;width:1px;height:3px;background:#8e8e8e;"></div>
<div class="a" style="left:858.0px;top:501px;width:1px;height:3px;background:#8e8e8e;"></div>
<div class="inp" style="left:883px;top:479px;width:33px;height:22px;"></div>

<div class="a" style="left:437px;top:574px;width:479px;height:1px;background:#a3a3a3;"></div>
<div class="btn" style="left:728px;top:587px;width:88px;height:21px;"></div>
<div class="a" style="left:828px;top:587px;width:88px;height:21px;background:#fdfdfd;border:1.5px solid #0a64c2;border-radius:4px;"></div>
<svg style="left:921px;top:609px" width="8" height="8" viewBox="0 0 8 8"><g fill="#a6a6a6"><rect x="6" y="0" width="2" height="2"/><rect x="3" y="3" width="2" height="2"/><rect x="6" y="3" width="2" height="2"/><rect x="0" y="6" width="2" height="2"/><rect x="3" y="6" width="2" height="2"/><rect x="6" y="6" width="2" height="2"/></g></svg>
<div class="t" style="left:71.10px;top:87.82px;font-size:11.5px;line-height:13.80px;letter-spacing:-0.055px;color:#000;">Superfici</div>
<div class="t" style="left:81.20px;top:109.82px;font-size:11.5px;line-height:13.80px;letter-spacing:-0.302px;color:#000;transform:scaleX(0.9945);transform-origin:0.00px 0;">Calcestruzzo</div>
<div class="t" style="left:81.20px;top:131.82px;font-size:11.5px;line-height:13.80px;letter-spacing:-0.352px;color:#000;transform:scaleX(0.9669);transform-origin:0.00px 0;">Ceramica</div>
<div class="t" style="left:81.80px;top:153.82px;font-size:11.5px;line-height:13.80px;letter-spacing:-0.062px;color:#000;">Costruzione in Pietra</div>
<div class="t" style="left:81.80px;top:175.82px;font-size:11.5px;line-height:13.80px;letter-spacing:0.105px;color:#000;">Finiture Muro</div>
<div class="t" style="left:81.80px;top:197.82px;font-size:11.5px;line-height:13.80px;letter-spacing:-0.072px;color:#000;">Isolamento</div>
<div class="t" style="left:81.80px;top:219.82px;font-size:11.5px;line-height:13.80px;letter-spacing:-0.370px;color:#000;">Legno</div>
<div class="t" style="left:81.80px;top:241.82px;font-size:11.5px;line-height:13.80px;letter-spacing:-0.015px;color:#000;">Manto Stradale</div>
<div class="t" style="left:81.80px;top:263.82px;font-size:11.5px;line-height:13.80px;letter-spacing:0.192px;color:#000;">Mattone</div>
<div class="t" style="left:81.80px;top:285.82px;font-size:11.5px;line-height:13.80px;letter-spacing:0.072px;color:#000;">Metallo</div>
<div class="t" style="left:71.40px;top:337.82px;font-size:11.5px;line-height:13.80px;letter-spacing:0.029px;color:#000;">Mattone - Bianco Naturale</div>
<div class="t" style="left:71.40px;top:358.82px;font-size:11.5px;line-height:13.80px;letter-spacing:0.055px;color:#000;">Mattone - Colore Superficie</div>
<div class="t" style="left:71.40px;top:379.82px;font-size:11.5px;line-height:13.80px;letter-spacing:0.028px;color:#fff;">Mattone - Disposizione a Correre</div>
<div class="t" style="left:71.40px;top:400.82px;font-size:11.5px;line-height:13.80px;letter-spacing:0.065px;color:#000;">Mattone - Disposizione a Griglia</div>
<div class="t" style="left:71.40px;top:421.82px;font-size:11.5px;line-height:13.80px;letter-spacing:0.018px;color:#000;">Mattone - Disposizione Accatastata</div>
<div class="t" style="left:71.40px;top:442.82px;font-size:11.5px;line-height:13.80px;letter-spacing:0.049px;color:#000;">Mattone - Disposizione Comune</div>
<div class="t" style="left:71.40px;top:463.82px;font-size:11.5px;line-height:13.80px;letter-spacing:0.034px;color:#000;">Mattone - Disposizione Fiamminga</div>
<div class="t" style="left:71.40px;top:484.82px;font-size:11.5px;line-height:13.80px;letter-spacing:0.138px;color:#000;">Mattone - Marrone</div>
<div class="t" style="left:71.40px;top:505.82px;font-size:11.5px;line-height:13.80px;letter-spacing:0.044px;color:#000;">Mattone - Naturale Invecchiato</div>
<div class="t" style="left:71.40px;top:526.82px;font-size:11.5px;line-height:13.80px;letter-spacing:-0.041px;color:#000;">Mattone - Rosso</div>
<div class="t" style="left:71.40px;top:547.82px;font-size:11.5px;line-height:13.80px;letter-spacing:-0.048px;color:#000;">Mattone - Rosso a spina di pesce</div>
<div class="t" style="left:71.40px;top:319.12px;font-size:11.5px;line-height:13.80px;letter-spacing:-0.511px;color:#000;transform:scaleX(0.9950);transform-origin:0.00px 0;">Nome</div>
<div class="t" style="left:46.90px;top:20.94px;font-size:12px;line-height:14.40px;letter-spacing:-0.149px;color:#8a8a8a;-webkit-text-stroke:0;">Superfici</div>
<div class="t" style="left:50.60px;top:59.32px;font-size:11.5px;line-height:13.80px;letter-spacing:-0.258px;color:#333;">Cerca Superfici</div>
<div class="t" style="left:437.40px;top:59.42px;font-size:11.5px;line-height:13.80px;letter-spacing:-0.423px;color:#000;transform:scaleX(0.9945);transform-origin:0.00px 0;">Nome:</div>
<div class="t" style="left:863.30px;top:59.42px;font-size:11.5px;line-height:13.80px;letter-spacing:-0.005px;color:#000;">Editabili: 1</div>
<div class="t" style="left:441.60px;top:89.32px;font-size:11.5px;line-height:13.80px;letter-spacing:0.008px;color:#000;">Mattone - Disposizione a Correre</div>
<div class="t" style="left:437.40px;top:124.52px;font-size:11.5px;line-height:13.80px;letter-spacing:0.119px;color:#000;">Impostazioni Motore:</div>
<div class="t" style="left:443.70px;top:153.92px;font-size:11.5px;line-height:13.80px;letter-spacing:-0.270px;color:#000;">Motore Base</div>
<div class="t" style="left:457.50px;top:232.72px;font-size:11.5px;line-height:13.80px;letter-spacing:0.000px;font-weight:bold;color:#000;transform:scaleX(0.8937);transform-origin:0.00px 0;">ESPOSIZIONE ALLA LUCE</div>
<div class="t" style="left:467.30px;top:263.72px;font-size:11.5px;line-height:13.80px;letter-spacing:0.000px;font-weight:bold;color:#000;transform:scaleX(0.9134);transform-origin:0.00px 0;">Colore superficie:</div>
<div class="t" style="left:437.40px;top:314.12px;font-size:11.5px;line-height:13.80px;letter-spacing:0.000px;font-weight:bold;color:#000;transform:scaleX(0.9034);transform-origin:0.00px 0;">Trasparenza</div>
<div class="t" style="left:437.40px;top:344.42px;font-size:11.5px;line-height:13.80px;letter-spacing:-0.296px;color:#000;transform:scaleX(0.9986);transform-origin:0.00px 0;">Trasmissione:</div>
<div class="t" style="left:437.40px;top:394.12px;font-size:11.5px;line-height:13.80px;letter-spacing:0.081px;color:#000;">Attenuazione:</div>
<div class="t" style="left:437.40px;top:453.92px;font-size:11.5px;line-height:13.80px;letter-spacing:0.000px;font-weight:bold;color:#000;transform:scaleX(0.9023);transform-origin:0.00px 0;">Emissione</div>
<div class="t" style="left:692.10px;top:264.12px;font-size:11.5px;line-height:13.80px;letter-spacing:0.000px;font-weight:bold;color:#000;transform:scaleX(0.9063);transform-origin:0.00px 0;">Riflessione</div>
<div class="t" style="left:692.10px;top:294.42px;font-size:11.5px;line-height:13.80px;letter-spacing:-0.072px;color:#000;">Ambiente:</div>
<div class="t" style="left:692.30px;top:344.42px;font-size:11.5px;line-height:13.80px;letter-spacing:0.187px;color:#000;">Diffusione:</div>
<div class="t" style="left:692.30px;top:394.12px;font-size:11.5px;line-height:13.80px;letter-spacing:-0.310px;color:#000;transform:scaleX(0.9846);transform-origin:0.00px 0;">Lucentezza:</div>
<div class="t" style="left:692.30px;top:453.92px;font-size:11.5px;line-height:13.80px;letter-spacing:0.000px;font-weight:bold;color:#000;transform:scaleX(0.9005);transform-origin:0.00px 0;">Speculare</div>
<div class="t" style="left:457.60px;top:517.62px;font-size:11.5px;line-height:13.80px;letter-spacing:0.000px;font-weight:bold;color:#000;transform:scaleX(0.9108);transform-origin:0.00px 0;">PRIMO PIANO RETINO COPRENTE</div>
<div class="t" style="left:457.60px;top:544.62px;font-size:11.5px;line-height:13.80px;letter-spacing:0.000px;font-weight:bold;color:#000;transform:scaleX(0.8439);transform-origin:0.00px 0;">TESSITURA</div>
<div class="t" style="left:61.60px;top:591.62px;font-size:11.5px;line-height:13.80px;letter-spacing:-0.119px;color:#000;">Nuovo...</div>
<div class="t" style="left:752.40px;top:591.62px;font-size:11.5px;line-height:13.80px;letter-spacing:0.172px;color:#000;">Annulla</div>
<div class="t" style="left:864.70px;top:591.62px;font-size:11.5px;line-height:13.80px;letter-spacing:-0.831px;color:#000;transform:scaleX(0.8930);transform-origin:0.00px 0;">OK</div>
<div class="t" style="left:631.30px;top:366.62px;font-size:11.5px;line-height:13.80px;letter-spacing:0.000px;color:#000;">0</div>
<div class="t" style="left:631.30px;top:416.62px;font-size:11.5px;line-height:13.80px;letter-spacing:0.000px;color:#000;">0</div>
<div class="t" style="left:631.30px;top:483.62px;font-size:11.5px;line-height:13.80px;letter-spacing:0.000px;color:#000;">0</div>
<div class="t" style="left:886.50px;top:316.62px;font-size:11.5px;line-height:13.80px;letter-spacing:-0.639px;color:#000;transform:scaleX(0.9218);transform-origin:0.00px 0;">70</div>
<div class="t" style="left:886.50px;top:366.62px;font-size:11.5px;line-height:13.80px;letter-spacing:-0.639px;color:#000;transform:scaleX(0.9218);transform-origin:0.00px 0;">70</div>
<div class="t" style="left:886.50px;top:416.62px;font-size:11.5px;line-height:13.80px;letter-spacing:0.000px;color:#000;">0</div>
<div class="t" style="left:886.50px;top:483.62px;font-size:11.5px;line-height:13.80px;letter-spacing:0.000px;color:#000;">0</div>
</body></html>
